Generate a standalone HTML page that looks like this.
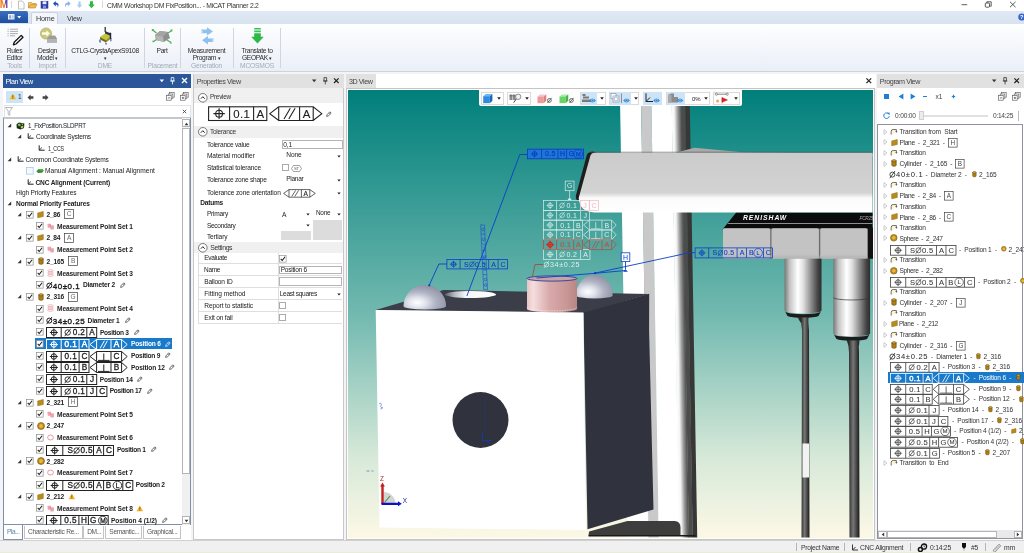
<!DOCTYPE html>
<html><head><meta charset="utf-8"><title>MiCAT Planner 2.2</title>
<style>
*{box-sizing:border-box;margin:0;padding:0}
html,body{width:1024px;height:553px;overflow:hidden;background:#f4f4f6}
body{will-change:transform;font-family:"Liberation Sans",sans-serif;font-size:6.6px;letter-spacing:-0.17px;color:#222;position:relative;line-height:1}
.abs{position:absolute}
svg{display:block;overflow:visible}
svg text{font-family:"Liberation Sans",sans-serif}
#title{left:0;top:0;width:1024px;height:11px;background:#fff}
#title .t{left:107.3px;top:2px;font-size:7.4px;letter-spacing:-0.3px;color:#333;white-space:nowrap;transform:scaleX(.924);transform-origin:0 50%}
#tabs{left:0;top:11px;width:1024px;height:13px;background:linear-gradient(#dfe8f4,#d9e3f0)}
#appbtn{left:0;top:0;width:28px;height:12px;background:linear-gradient(#3a6ec0,#1f4f9e);border-radius:0 2px 0 0}
#hometab{left:31px;top:1px;width:27px;height:13px;background:#f3f6fb;border:1px solid #c9d3e2;border-bottom:none;border-radius:2px 2px 0 0}
#tabs .lbl{top:4px;font-size:7.2px;color:#333}
#ribbon{left:0;top:24px;width:1024px;height:47px;background:linear-gradient(#fdfeff,#f6f8fc 40%,#eaeff7)}
#ribbon .sep{top:4px;width:1px;height:40px;background:#cfd6e2}
#ribbon .bl{font-size:6.7px;letter-spacing:-0.32px;color:#2a2a2a;text-align:center;line-height:7px;white-space:nowrap;transform:translateX(-50%)}
#ribbon .gl{top:39.3px;font-size:6.7px;letter-spacing:-0.2px;color:#a3abb8;text-align:center;white-space:nowrap;transform:translateX(-50%)}
#ribline{left:0;top:71px;width:1024px;height:1px;background:#cdd3dc}
.phead{height:14px;font-size:7.2px;white-space:nowrap}
.phead span{position:absolute;left:2.6px;top:3.5px}
#status{left:0;top:540px;width:1024px;height:13px;background:#f0f0f0;border-top:1px solid #d0d0d0}
#status .s{top:4px;font-size:6.8px;letter-spacing:-0.25px;color:#333;white-space:nowrap}
#status .v{top:2px;width:1px;height:8px;background:#b5b5b5}
.row{position:absolute;left:0;white-space:nowrap;height:12px}
.cb{position:absolute;width:7.6px;height:7.6px}
.tx{position:absolute;white-space:nowrap;font-size:6.6px}
.b{font-weight:bold;letter-spacing:-0.26px}
</style></head><body>
<!-- ===== Title bar ===== -->
<div id="title" class="abs">
 <svg class="abs" style="left:0;top:0" width="106" height="11" viewBox="0 0 106 11">
  <!-- M logo -->
  <clipPath id="mL"><rect x="-3" y="0" width="8" height="11"/></clipPath><clipPath id="mR"><rect x="5" y="0" width="6" height="11"/></clipPath>
  <text x="-0.300" y="8" font-size="10" font-weight="bold" fill="#f07a1c" clip-path="url(#mL)">M</text>
  <text x="-0.300" y="8" font-size="10" font-weight="bold" fill="#5b3fa8" clip-path="url(#mR)">M</text>
  <rect x="11" y="1" width="0.7" height="7" fill="#c8c8c8"/>
  <!-- new doc -->
  <path d="M18.5 1 h3.6 l2 2 v6 h-5.6z" fill="#fdfdfd" stroke="#9a9a9a" stroke-width=".6"/>
  <!-- open folder -->
  <path d="M28.5 8 v-5.5 h3 l.8 1 h3.6 v1.2" fill="#f6d27a" stroke="#b8862b" stroke-width=".6"/>
  <path d="M28.5 8 l1.8 -3.6 h6.7 l-1.8 3.6z" fill="#f2b84a" stroke="#b8862b" stroke-width=".6"/>
  <!-- save -->
  <rect x="41" y="1.2" width="7" height="7" fill="#2f3fb0" stroke="#1d2a84" stroke-width=".5"/>
  <rect x="42.6" y="1.4" width="3.8" height="2.8" fill="#e9ecff"/>
  <rect x="43" y="5.6" width="3" height="2.6" fill="#8b93d8"/>
  <!-- undo -->
  <path d="M53 3.6 l2.8 -2.6 v1.8 c3 0 3.6 2.6 1.6 5 c.8 -2 0 -3.2 -1.6 -3.2 v1.8z" fill="#1b4fc0"/>
  <!-- redo -->
  <path d="M70.6 3.6 l-2.8 -2.6 v1.8 c-3 0 -3.6 2.6 -1.6 5 c-.8 -2 0 -3.2 1.6 -3.2 v1.8z" fill="#8fb0e6"/>
  <!-- down light -->
  <path d="M78.4 1.5 h2.2 v3.2 h1.6 l-2.7 3.2 l-2.7 -3.2 h1.6z" fill="#a9cdf3"/>
  <!-- down green -->
  <path d="M90 1.2 h3 v3.2 h1.8 l-3.3 3.8 l-3.3 -3.8 h1.8z" fill="#2fb84a"/>
  <rect x="102" y="1" width="0.7" height="7" fill="#c8c8c8"/>
 </svg>
 <div class="abs t">CMM Workshop DM FixPosition... - MiCAT Planner 2.2</div>
 <svg class="abs" style="left:955px;top:0" width="69" height="11" viewBox="0 0 69 11">
  <path d="M6.500 4.700h5.700" stroke="#333" stroke-width=".8"/>
  <rect x="30.300" y="3" width="4.200" height="4.200" rx=".8" fill="none" stroke="#333" stroke-width=".8"/>
  <path d="M31.800 3v-1.200h4.400v4.400h-1.400" fill="none" stroke="#333" stroke-width=".8"/>
  <path d="M55 1.800l5.600 5.400m0 -5.400l-5.600 5.400" stroke="#333" stroke-width=".8"/>
 </svg>
</div>
<!-- ===== Tabs row ===== -->
<div id="tabs" class="abs">
 <div id="appbtn" class="abs">
  <svg width="28" height="12" viewBox="0 0 28 12"><rect x="8" y="3" width="6.5" height="5.5" fill="#e9eef8"/><rect x="9" y="4.3" width="2" height="3.2" fill="#8da6d4"/><rect x="11.8" y="4.3" width="1.8" height="3.2" fill="#b9c8e6"/><path d="M17.2 5 h4 l-2 2.4z" fill="#fff"/></svg>
 </div>
 <div id="hometab" class="abs"></div>
 <div class="abs lbl" style="left:36px">Home</div>
 <div class="abs lbl" style="left:67px">View</div>
 <svg class="abs" style="left:1017px;top:2px" width="7" height="8" viewBox="0 0 7 8"><circle cx="4.700" cy="4" r="3.500" fill="#3a66c8"/><text x="3.100" y="6.100" font-size="5.600" font-weight="bold" fill="#fff">?</text></svg>
</div>
<!-- ===== Ribbon ===== -->
<div id="ribbon" class="abs">
 <div class="abs sep" style="left:29px"></div>
 <div class="abs sep" style="left:65px"></div>
 <div class="abs sep" style="left:144px"></div>
 <div class="abs sep" style="left:180px"></div>
 <div class="abs sep" style="left:233px"></div>
 <div class="abs sep" style="left:280px"></div>
 <!-- Rules Editor icon -->
 <svg class="abs" style="left:6px;top:3px" width="18" height="18" viewBox="0 0 18 18">
  <g stroke="#8a8a8a" stroke-width=".7"><path d="M1.5 2.2h1.2M4 2.2h8M1.5 4.4h1.2M4 4.4h8M1.5 6.6h1.2M4 6.6h8M1.5 8.8h1.2M4 8.8h5"/></g>
  <path d="M8.2 15.2 l7 -6.8 l1.8 1.8 l-7 6.8 l-2.6 .8z" fill="#fff" stroke="#111" stroke-width="1.3" stroke-linejoin="round"/>
 </svg>
 <div class="abs bl" style="left:14.5px;top:23px">Rules<br>Editor</div>
 <div class="abs gl" style="left:14.5px">Tools</div>
 <!-- Design Model icon -->
 <svg class="abs" style="left:39px;top:3px" width="19" height="18" viewBox="0 0 19 18">
  <circle cx="7" cy="6.5" r="5.6" fill="#c9c77a" stroke="#aaa85a" stroke-width=".6"/>
  <path d="M3 5.2 h4.4 v-2 l3.6 3.3 l-3.6 3.3 v-2 h-4.4z" fill="#fdfde8"/>
  <path d="M8 12 l3 -3.2 h5 l2 3.2 v3.6 h-10z" fill="#8d8d8d"/>
  <path d="M8 12 h10 v3.600 h-10z" fill="#b4b4b4"/>
  <path d="M11 8.800 h5 l2 3.200 h-10z" fill="#9c9c9c"/>
 </svg>
 <div class="abs bl" style="left:47.5px;top:23px">Design<br>Model <span style="font-size:5px">▾</span></div>
 <div class="abs gl" style="left:47.5px">Import</div>
 <!-- DME icon -->
 <svg class="abs" style="left:97px;top:2px" width="18" height="19" viewBox="0 0 18 19">
  <path d="M8.2 1 v5" stroke="#222" stroke-width="1.2"/>
  <path d="M8 5 l6 2.6 v3 l-6 -2.600z" fill="#2b3350"/>
  <path d="M3 11 l5 -3.600 l6 2.600 l-5 4z" fill="#c8c43a"/>
  <path d="M3 11 l6 3 v2.400 l-6 -3z" fill="#6f6d20"/>
  <path d="M9 14 l5 -4 v2.400 l-5 4z" fill="#8f8c2a"/>
  <path d="M2.400 13.600 l1.200 .6 v2.600 l-1.200 -.6z M8.400 16.600 l1.200 .6 v1.600 l-1.200 -.6z M13.400 12.600 l1 -.6 v3 l-1 .6z" fill="#27408a"/>
  <path d="M12.800 6.400 l1.400 .6 v6 l-1.400 -.6z" fill="#1c2238"/>
 </svg>
 <div class="abs bl" style="left:105px;top:23px">CTLG-CrystaApexS9108<br><span style="font-size:5px">▾</span></div>
 <div class="abs gl" style="left:105px">DME</div>
 <!-- Part icon -->
 <svg class="abs" style="left:151px;top:4px" width="22" height="17" viewBox="0 0 22 17">
  <path d="M4 7 l5 -4 l8 1 l2 6 l-6 4 l-8 -2z" fill="#8f8f8f"/>
  <path d="M4 7 l8 1.400 l1 5.600 l-8 -2z" fill="#b5b5b5"/>
  <path d="M9 3 l8 1 l-5 4.400 l-8 -1.400z" fill="#a4a4a4"/>
  <path d="M1 1.500 l4.500 3.500 M21 2.500 l-4 2.500 M2.500 13.500 l3 -2 M20 14.500 l-4 -2.500" stroke="#4db24d" stroke-width="1.3"/>
  <path d="M0.800 3.600 l.2 -2.400 l2.400 .4z M21.400 1 l-.2 2.400 l-2.200 -1.200z M1.200 12.400 l.6 2.200 l2 -1.200z M21 15.600 l-2.400 -.2 l1.200 -2z" fill="#4db24d"/>
 </svg>
 <div class="abs bl" style="left:162px;top:23px">Part</div>
 <div class="abs gl" style="left:162.500px">Placement</div>
 <!-- Measurement Program icon -->
 <svg class="abs" style="left:199px;top:3px" width="17" height="18" viewBox="0 0 17 18">
  <path d="M2 2.600 h6 v-2.400 l6 4.200 l-6 4.200 v-2.400 h-6z" fill="#8fc0ee"/>
  <path d="M15 11.400 h-6 v-2.400 l-6 4.200 l6 4.200 v-2.400 h6z" fill="#8fc0ee"/>
  <path d="M2 2.600 h1.600 v3.600 h-1.600z M13.400 11.400 h1.600 v3.600 h-1.600z" fill="#cfe3f7"/>
 </svg>
 <div class="abs bl" style="left:206.500px;top:23px">Measurement<br>Program <span style="font-size:5px">▾</span></div>
 <div class="abs gl" style="left:206.500px">Generation</div>
 <!-- Translate icon -->
 <svg class="abs" style="left:250px;top:3px" width="15" height="18" viewBox="0 0 15 18">
  <path d="M4.200 1 h6.600 v1.600 h-6.600z M4.200 3.600 h6.600 v1.600 h-6.600z" fill="#39c257"/>
  <path d="M4.200 6.200 h6.600 v3.600 h3 l-6.300 6.800 l-6.300 -6.800 h3z" fill="#2fb84a"/>
 </svg>
 <div class="abs bl" style="left:257px;top:23px">Translate to<br>GEOPAK <span style="font-size:5px">▾</span></div>
 <div class="abs gl" style="left:257px">MCOSMOS</div>
</div>
<div id="ribline" class="abs"></div>
<!-- ===== Status bar ===== -->
<div id="status" class="abs">
 <div class="abs v" style="left:796px"></div><div class="abs v" style="left:844px"></div><div class="abs v" style="left:910px"></div><div class="abs v" style="left:985px"></div>
 <div class="abs s" style="left:801px">Project Name</div>
 <svg class="abs" style="left:851px;top:3px" width="8" height="8" viewBox="0 0 8 8"><path d="M1.500 0.500 v5.500 h5.500 M1.500 6 l3 -3" fill="none" stroke="#222" stroke-width=".9"/></svg>
 <div class="abs s" style="left:860px">CNC Alignment</div>
 <svg class="abs" style="left:917px;top:1.500px" width="11" height="10" viewBox="0 0 11 10"><circle cx="3.400" cy="6.400" r="2" fill="none" stroke="#111" stroke-width="1.500"/><circle cx="7" cy="3.600" r="2.600" fill="none" stroke="#111" stroke-width="1.300"/><path d="M7 2.200 v1.600 h1" stroke="#111" stroke-width=".6" fill="none"/></svg>
 <div class="abs s" style="left:930px">0:14:25</div>
 <svg class="abs" style="left:961px;top:1px" width="6" height="10" viewBox="0 0 6 10"><path d="M1 1 h4 v3.500 l-1.200 2 h-1.600 l-1.200 -2z" fill="#111"/><path d="M3 6 v3" stroke="#888" stroke-width=".5"/></svg>
 <div class="abs s" style="left:971px">#5</div>
 <svg class="abs" style="left:992px;top:2px" width="10" height="9" viewBox="0 0 10 9"><path d="M1 7.600 l6 -6.400 l1.800 1.600 l-6 6.400z" fill="#ddd" stroke="#666" stroke-width=".6"/><path d="M3 5.400 l1 1 M4.400 4 l1 1 M5.800 2.600 l1 1" stroke="#666" stroke-width=".4"/></svg>
 <div class="abs s" style="left:1004px">mm</div>
 <div class="abs" style="left:0;top:11px;width:1024px;height:1px;background:#e9ecd6"></div>
</div>
<div id="plan" class="abs" style="left:3px;top:74px;width:188px;height:466px;background:#fff">
<div class="abs phead" style="left:0;top:0;width:188px;background:#2b579a;color:#fff"><span style="letter-spacing:-0.52px">Plan View</span><svg class="abs" style="left:155px;top:2px" width="33" height="10" viewBox="0 0 33 10"><path d="M1.6 3.4h4.4l-2.200 2.800z" fill="#fff"/><path d="M13.200 1.600h2.600v3.400h-2.600zM12.200 5h4.600M14.500 5v3.400" stroke="#fff" stroke-width=".8" fill="none"/><path d="M24 2l5 5m0 -5l-5 5" stroke="#fff" stroke-width="1.300"/></svg></div>
<div class="abs" style="left:3px;top:17px;width:17px;height:11.500px;background:#cce4f7"></div>
<div class="abs" style="left:6.00px;top:19.20px;"><svg width="7.6" height="6.6499999999999995" viewBox="0 0 8 7"><path d="M4 0.4L7.6 6.6H0.4Z" fill="#f5b82e"/><path d="M4 2.4V4.6M4 5.2V6" stroke="#5a3a00" stroke-width=".8"/></svg></div>
<div class="tx" style="left:15.00px;top:19.90px;color:#333;">1</div>
<div class="abs" style="left:24.00px;top:19.50px;"><svg width="7" height="7" viewBox="0 0 7 7"><path d="M0.500 3.500L3.600 0.600V2.200H6.400V4.800H3.600V6.400Z" fill="#444"/></svg></div>
<div class="abs" style="left:38.50px;top:19.50px;"><svg width="7" height="7" viewBox="0 0 7 7"><path d="M6.500 3.500L3.400 0.600V2.200H0.600V4.800H3.400V6.400Z" fill="#444"/></svg></div>
<div class="abs" style="left:163.00px;top:18.00px;"><svg width="9" height="9" viewBox="0 0 9 9"><g fill="#fff" stroke="#666" stroke-width=".7"><rect x="3.600" y="0.600" width="4.600" height="4.600"/><rect x="2.200" y="2" width="4.600" height="4.600"/><rect x="0.600" y="3.600" width="4.600" height="4.600"/></g><path d="M1.800 5.900h2.200" stroke="#444" stroke-width=".7"/></svg></div>
<div class="abs" style="left:176.50px;top:18.00px;"><svg width="9" height="9" viewBox="0 0 9 9"><g fill="#fff" stroke="#666" stroke-width=".7"><rect x="3.600" y="0.600" width="4.600" height="4.600"/><rect x="2.200" y="2" width="4.600" height="4.600"/><rect x="0.600" y="3.600" width="4.600" height="4.600"/></g><path d="M1.800 5.900h2.200M2.900 4.800v2.200" stroke="#444" stroke-width=".7"/></svg></div>
<div class="abs" style="left:0.500px;top:31px;width:187px;height:11.500px;border:0.600px solid #dfe3ea;border-bottom:none;background:#fff"></div>
<div class="abs" style="left:2.00px;top:33.00px;"><svg width="8" height="9" viewBox="0 0 8 9"><path d="M0.500 0.500H7.500L4.800 4V8.400L3.200 7.400V4Z" fill="#fff" stroke="#888" stroke-width=".6"/></svg></div>
<div class="abs" style="left:178.50px;top:34.50px;"><svg width="5" height="5" viewBox="0 0 5 5"><path d="M0.800 0.800l3.400 3.400m0 -3.400l-3.400 3.400" stroke="#333" stroke-width=".8"/></svg></div>
<div class="abs" style="left:0.300px;top:42.500px;width:187.600px;height:408.500px;border:0.800px solid #7f8fa8;border-top:2px solid #c3c7ce;background:#fff;overflow:hidden"></div>
<div class="abs" style="left:1px;top:44px;width:178px;height:406.500px;overflow:hidden"><div class="abs" style="left:-1px;top:-44px">
<div class="abs" style="left:4.00px;top:49.00px;"><svg width="5" height="5" viewBox="0 0 5 5"><path d="M4.2 0.6V4.2H0.6Z" fill="#333"/></svg></div>
<div class="abs" style="left:12.50px;top:47.60px;"><svg width="9" height="8" viewBox="0 0 9 8"><path d="M0.5 2.2L3 0.6L8.4 1.6L8 6L4.6 7.6L0.8 6.2Z" fill="#1d2a1a"/><path d="M1.6 2.6L3.6 1.6L5 3L3 4.4Z" fill="#7fcf5a"/><path d="M4.6 4.6L7.2 3.4L7.4 5.4L5 6.6Z" fill="#b7d94a"/><path d="M5.2 1.6L7.2 2L6.2 3Z" fill="#e9f0c8"/></svg></div>
<div class="tx" style="left:24.50px;top:49.10px;letter-spacing:-0.3px;transform:scaleX(0.942);transform-origin:0 50%;">1_FixPosition.SLDPRT</div>
<div class="abs" style="left:13.80px;top:60.30px;"><svg width="5" height="5" viewBox="0 0 5 5"><path d="M4.2 0.6V4.2H0.6Z" fill="#333"/></svg></div>
<div class="abs" style="left:24.00px;top:59.40px;"><svg width="7" height="7" viewBox="0 0 7 7"><path d="M1.2 0.3V5.2H6.6" fill="none" stroke="#222" stroke-width="1"/><path d="M1.2 5.2L4 2.4" stroke="#222" stroke-width=".8"/></svg></div>
<div class="tx" style="left:33.00px;top:60.40px;letter-spacing:-0.249px;">Coordinate Systems</div>
<div class="abs" style="left:34.50px;top:70.60px;"><svg width="7" height="7" viewBox="0 0 7 7"><path d="M1.2 0.3V5.2H6.6" fill="none" stroke="#222" stroke-width="1"/><path d="M1.2 5.2L4 2.4" stroke="#222" stroke-width=".8"/></svg></div>
<div class="tx" style="left:45.00px;top:71.60px;letter-spacing:-0.3px;transform:scaleX(0.797);transform-origin:0 50%;">1_CCS</div>
<div class="abs" style="left:4.00px;top:83.00px;"><svg width="5" height="5" viewBox="0 0 5 5"><path d="M4.2 0.6V4.2H0.6Z" fill="#333"/></svg></div>
<div class="abs" style="left:14.00px;top:82.10px;"><svg width="7" height="7" viewBox="0 0 7 7"><path d="M1.2 0.3V5.2H6.6" fill="none" stroke="#222" stroke-width="1"/><path d="M1.2 5.2L4 2.4" stroke="#222" stroke-width=".8"/></svg></div>
<div class="tx" style="left:22.50px;top:83.10px;letter-spacing:-0.189px;">Common Coordinate Systems</div>
<svg class="cb" style="left:22.80px;top:92.70px" width="7.600" height="7.600" viewBox="0 0 7.600 7.600"><rect x="0.450" y="0.450" width="6.700" height="6.700" fill="#f4f9fe" stroke="#9cc2e8" stroke-width=".7"/></svg>
<div class="abs" style="left:33.00px;top:93.60px;"><svg width="8" height="6" viewBox="0 0 8 6"><path d="M0.4 3.2L2.6 1L6.6 1L7.8 2.8L6 4.8L2 5Z" fill="#3c8a3c"/><path d="M2.6 1L6.6 1L7.8 2.8L4 2.6Z" fill="#5fae4f"/></svg></div>
<div class="tx" style="left:42.00px;top:94.10px;letter-spacing:-0.013px;">Manual Alignment : Manual Alignment</div>
<div class="abs" style="left:24.00px;top:104.50px;"><svg width="7" height="7" viewBox="0 0 7 7"><path d="M1.2 0.3V5.2H6.6" fill="none" stroke="#222" stroke-width="1"/><path d="M1.2 5.2L4 2.4" stroke="#222" stroke-width=".8"/></svg></div>
<div class="tx b" style="left:32.50px;top:105.50px;letter-spacing:-0.155px;">CNC Alignment (Current)</div>
<div class="tx" style="left:13.00px;top:116.10px;letter-spacing:-0.158px;">High Priority Features</div>
<div class="abs" style="left:4.00px;top:127.00px;"><svg width="5" height="5" viewBox="0 0 5 5"><path d="M4.2 0.6V4.2H0.6Z" fill="#333"/></svg></div>
<div class="tx b" style="left:13.00px;top:127.10px;letter-spacing:-0.132px;">Normal Priority Features</div>
<div class="abs" style="left:14.00px;top:137.80px;"><svg width="5" height="5" viewBox="0 0 5 5"><path d="M4.2 0.6V4.2H0.6Z" fill="#333"/></svg></div>
<svg class="cb" style="left:22.80px;top:136.50px" width="7.600" height="7.600" viewBox="0 0 7.600 7.600"><rect x="0.450" y="0.450" width="6.700" height="6.700" fill="#fff" stroke="#8a8a8a" stroke-width=".7"/><path d="M1.700 3.900L3.200 5.500L6.100 1.700" fill="none" stroke="#1a1a1a" stroke-width="1.050"/></svg>
<div class="abs" style="left:34.00px;top:136.90px;"><svg width="7.0" height="7.0" viewBox="0 0 7 7"><path d="M0.700 1.900L6.300 0.500V5.500L0.700 6.800Z" fill="#b98a1c" stroke="#8f6a12" stroke-width=".5"/></svg></div>
<div class="tx b" style="left:43.60px;top:137.90px;letter-spacing:-0.294px;">2_86</div>
<div class="abs" style="left:60.90px;top:135.40px;"><svg width="10" height="10" viewBox="0 0 10 10"><rect x="0.5" y="0.5" width="9" height="9" fill="#fff" stroke="#3c3c3c" stroke-width=".7"/><text x="5" y="7.4" font-size="6.6" text-anchor="middle" fill="#6a6a6a">C</text></svg></div>
<svg class="cb" style="left:33.10px;top:148.25px" width="7.600" height="7.600" viewBox="0 0 7.600 7.600"><rect x="0.450" y="0.450" width="6.700" height="6.700" fill="#fff" stroke="#8a8a8a" stroke-width=".7"/><path d="M1.700 3.900L3.200 5.500L6.100 1.700" fill="none" stroke="#1a1a1a" stroke-width="1.050"/></svg>
<div class="abs" style="left:43.50px;top:148.65px;"><svg width="8" height="7" viewBox="0 0 8 7"><rect x="0.600" y="0.700" width="3.400" height="4" rx=".6" fill="#eda3ad"/><rect x="3.300" y="2.300" width="3.600" height="4.100" rx=".6" fill="#eda3ad"/><path d="M3.300 0.900V4.500" stroke="#e58a96" stroke-width=".6"/></svg></div>
<div class="tx b" style="left:54.00px;top:149.65px;letter-spacing:-0.113px;">Measurement Point Set 1</div>
<div class="abs" style="left:14.00px;top:161.30px;"><svg width="5" height="5" viewBox="0 0 5 5"><path d="M4.2 0.6V4.2H0.6Z" fill="#333"/></svg></div>
<svg class="cb" style="left:22.80px;top:160.00px" width="7.600" height="7.600" viewBox="0 0 7.600 7.600"><rect x="0.450" y="0.450" width="6.700" height="6.700" fill="#fff" stroke="#8a8a8a" stroke-width=".7"/><path d="M1.700 3.900L3.200 5.500L6.100 1.700" fill="none" stroke="#1a1a1a" stroke-width="1.050"/></svg>
<div class="abs" style="left:34.00px;top:160.40px;"><svg width="7.0" height="7.0" viewBox="0 0 7 7"><path d="M0.700 1.900L6.300 0.500V5.500L0.700 6.800Z" fill="#b98a1c" stroke="#8f6a12" stroke-width=".5"/></svg></div>
<div class="tx b" style="left:43.60px;top:161.40px;letter-spacing:-0.294px;">2_84</div>
<div class="abs" style="left:60.90px;top:158.90px;"><svg width="10" height="10" viewBox="0 0 10 10"><rect x="0.5" y="0.5" width="9" height="9" fill="#fff" stroke="#3c3c3c" stroke-width=".7"/><text x="5" y="7.4" font-size="6.6" text-anchor="middle" fill="#6a6a6a">A</text></svg></div>
<svg class="cb" style="left:33.10px;top:171.75px" width="7.600" height="7.600" viewBox="0 0 7.600 7.600"><rect x="0.450" y="0.450" width="6.700" height="6.700" fill="#fff" stroke="#8a8a8a" stroke-width=".7"/><path d="M1.700 3.900L3.200 5.500L6.100 1.700" fill="none" stroke="#1a1a1a" stroke-width="1.050"/></svg>
<div class="abs" style="left:43.50px;top:172.15px;"><svg width="8" height="7" viewBox="0 0 8 7"><rect x="0.600" y="0.700" width="3.400" height="4" rx=".6" fill="#eda3ad"/><rect x="3.300" y="2.300" width="3.600" height="4.100" rx=".6" fill="#eda3ad"/><path d="M3.300 0.900V4.500" stroke="#e58a96" stroke-width=".6"/></svg></div>
<div class="tx b" style="left:54.00px;top:173.15px;letter-spacing:-0.113px;">Measurement Point Set 2</div>
<div class="abs" style="left:14.00px;top:184.80px;"><svg width="5" height="5" viewBox="0 0 5 5"><path d="M4.2 0.6V4.2H0.6Z" fill="#333"/></svg></div>
<svg class="cb" style="left:22.80px;top:183.50px" width="7.600" height="7.600" viewBox="0 0 7.600 7.600"><rect x="0.450" y="0.450" width="6.700" height="6.700" fill="#fff" stroke="#8a8a8a" stroke-width=".7"/><path d="M1.700 3.900L3.200 5.500L6.100 1.700" fill="none" stroke="#1a1a1a" stroke-width="1.050"/></svg>
<div class="abs" style="left:34.50px;top:183.40px;"><svg width="6.0" height="8.0" viewBox="0 0 6 8"><path d="M0.800 1.800V6.200A2.200 1.100 0 0 0 5.200 6.200V1.800Z" fill="#b07f14" stroke="#5e430a" stroke-width=".6"/><ellipse cx="3" cy="1.800" rx="2.200" ry="1.100" fill="#d9a935" stroke="#5e430a" stroke-width=".6"/></svg></div>
<div class="tx b" style="left:43.60px;top:184.90px;letter-spacing:-0.188px;">2_165</div>
<div class="abs" style="left:64.70px;top:182.40px;"><svg width="10" height="10" viewBox="0 0 10 10"><rect x="0.5" y="0.5" width="9" height="9" fill="#fff" stroke="#3c3c3c" stroke-width=".7"/><text x="5" y="7.4" font-size="6.6" text-anchor="middle" fill="#6a6a6a">B</text></svg></div>
<svg class="cb" style="left:33.10px;top:195.25px" width="7.600" height="7.600" viewBox="0 0 7.600 7.600"><rect x="0.450" y="0.450" width="6.700" height="6.700" fill="#fff" stroke="#8a8a8a" stroke-width=".7"/><path d="M1.700 3.900L3.200 5.500L6.100 1.700" fill="none" stroke="#1a1a1a" stroke-width="1.050"/></svg>
<div class="abs" style="left:43.50px;top:195.15px;"><svg width="7" height="8" viewBox="0 0 7 8"><g fill="none" stroke="#e08a92" stroke-width=".6"><ellipse cx="3.5" cy="1.8" rx="2.8" ry="1.1"/><ellipse cx="3.5" cy="4" rx="2.8" ry="1.1"/><ellipse cx="3.5" cy="6.2" rx="2.8" ry="1.1"/></g></svg></div>
<div class="tx b" style="left:54.00px;top:196.65px;letter-spacing:-0.113px;">Measurement Point Set 3</div>
<svg class="cb" style="left:33.10px;top:207.00px" width="7.600" height="7.600" viewBox="0 0 7.600 7.600"><rect x="0.450" y="0.450" width="6.700" height="6.700" fill="#fff" stroke="#8a8a8a" stroke-width=".7"/><path d="M1.700 3.900L3.200 5.500L6.100 1.700" fill="none" stroke="#1a1a1a" stroke-width="1.050"/></svg>
<div class="abs" style="left:43.2px;top:206.10px"><svg width="40" height="11" viewBox="0 0 40 11"><circle cx="3.300" cy="5.600" r="2.500" fill="none" stroke="#1a1a1a" stroke-width="1"/><path d="M0.600 9.200L6 2" stroke="#1a1a1a" stroke-width="1"/><text x="6.800" y="8.500" font-size="8" letter-spacing="0.500" fill="#1a1a1a" stroke="#1a1a1a" stroke-width=".35">40±0.1</text></svg></div>
<div class="tx b" style="left:80.00px;top:208.40px;letter-spacing:-0.172px;">Diameter 2</div>
<div class="abs" style="left:117.00px;top:207.90px;"><svg width="6" height="6" viewBox="0 0 6 6"><path d="M0.6 5.4L1 3.8L3.8 0.8L5.2 2.2L2.2 5Z" fill="none" stroke="#333" stroke-width=".7" stroke-linejoin="round"/><path d="M3 1.8L4.2 3" stroke="#333" stroke-width=".5"/></svg></div>
<div class="abs" style="left:14.00px;top:220.05px;"><svg width="5" height="5" viewBox="0 0 5 5"><path d="M4.2 0.6V4.2H0.6Z" fill="#333"/></svg></div>
<svg class="cb" style="left:22.80px;top:218.75px" width="7.600" height="7.600" viewBox="0 0 7.600 7.600"><rect x="0.450" y="0.450" width="6.700" height="6.700" fill="#fff" stroke="#8a8a8a" stroke-width=".7"/><path d="M1.700 3.900L3.200 5.500L6.100 1.700" fill="none" stroke="#1a1a1a" stroke-width="1.050"/></svg>
<div class="abs" style="left:34.50px;top:218.65px;"><svg width="6.0" height="8.0" viewBox="0 0 6 8"><path d="M0.800 1.800V6.200A2.200 1.100 0 0 0 5.200 6.200V1.800Z" fill="#b07f14" stroke="#5e430a" stroke-width=".6"/><ellipse cx="3" cy="1.800" rx="2.200" ry="1.100" fill="#d9a935" stroke="#5e430a" stroke-width=".6"/></svg></div>
<div class="tx b" style="left:43.60px;top:220.15px;letter-spacing:-0.188px;">2_316</div>
<div class="abs" style="left:64.70px;top:217.65px;"><svg width="10" height="10" viewBox="0 0 10 10"><rect x="0.5" y="0.5" width="9" height="9" fill="#fff" stroke="#3c3c3c" stroke-width=".7"/><text x="5" y="7.4" font-size="6.6" text-anchor="middle" fill="#6a6a6a">G</text></svg></div>
<svg class="cb" style="left:33.10px;top:230.50px" width="7.600" height="7.600" viewBox="0 0 7.600 7.600"><rect x="0.450" y="0.450" width="6.700" height="6.700" fill="#fff" stroke="#8a8a8a" stroke-width=".7"/><path d="M1.700 3.900L3.200 5.500L6.100 1.700" fill="none" stroke="#1a1a1a" stroke-width="1.050"/></svg>
<div class="abs" style="left:43.50px;top:230.40px;"><svg width="7" height="8" viewBox="0 0 7 8"><g fill="none" stroke="#e08a92" stroke-width=".6"><ellipse cx="3.5" cy="1.8" rx="2.8" ry="1.1"/><ellipse cx="3.5" cy="4" rx="2.8" ry="1.1"/><ellipse cx="3.5" cy="6.2" rx="2.8" ry="1.1"/></g></svg></div>
<div class="tx b" style="left:54.00px;top:231.90px;letter-spacing:-0.113px;">Measurement Point Set 4</div>
<svg class="cb" style="left:33.10px;top:242.25px" width="7.600" height="7.600" viewBox="0 0 7.600 7.600"><rect x="0.450" y="0.450" width="6.700" height="6.700" fill="#fff" stroke="#8a8a8a" stroke-width=".7"/><path d="M1.700 3.900L3.200 5.500L6.100 1.700" fill="none" stroke="#1a1a1a" stroke-width="1.050"/></svg>
<div class="abs" style="left:43.2px;top:241.35px"><svg width="40" height="11" viewBox="0 0 40 11"><circle cx="3.300" cy="5.600" r="2.500" fill="none" stroke="#1a1a1a" stroke-width="1"/><path d="M0.600 9.200L6 2" stroke="#1a1a1a" stroke-width="1"/><text x="6.800" y="8.500" font-size="8" letter-spacing="0.500" fill="#1a1a1a" stroke="#1a1a1a" stroke-width=".35">34±0.25</text></svg></div>
<div class="tx b" style="left:84.60px;top:243.65px;letter-spacing:-0.172px;">Diameter 1</div>
<div class="abs" style="left:122.00px;top:243.15px;"><svg width="6" height="6" viewBox="0 0 6 6"><path d="M0.6 5.4L1 3.8L3.8 0.8L5.2 2.2L2.2 5Z" fill="none" stroke="#333" stroke-width=".7" stroke-linejoin="round"/><path d="M3 1.8L4.2 3" stroke="#333" stroke-width=".5"/></svg></div>
<svg class="cb" style="left:33.10px;top:254.00px" width="7.600" height="7.600" viewBox="0 0 7.600 7.600"><rect x="0.450" y="0.450" width="6.700" height="6.700" fill="#fff" stroke="#8a8a8a" stroke-width=".7"/><path d="M1.700 3.900L3.200 5.500L6.100 1.700" fill="none" stroke="#1a1a1a" stroke-width="1.050"/></svg>
<div class="abs" style="left:43.10px;top:253.20px;"><svg width="51.70" height="11.00" viewBox="0 0 51.70 11.00"><rect x="0.50" y="0.50" width="50.20" height="10.00" fill="none" stroke="#222" stroke-width="1.0"/><path d="M15.20 0.50v10.00M40.80 0.50v10.00" stroke="#222" stroke-width="1.0"/><circle cx="7.85" cy="5.50" r="2.7" fill="none" stroke="#222" stroke-width="1.0"/><path d="M3.85 5.50h8.00M7.85 1.50v8.00" stroke="#222" stroke-width="1.0"/><circle cx="21.70" cy="5.50" r="2.7" fill="none" stroke="#222" stroke-width="0.9"/><path d="M18.70 9.20L24.70 1.80" stroke="#222" stroke-width="0.9"/><text x="26.80" y="8.45" font-size="8.2" fill="#222" stroke="#222" stroke-width="0.3" font-weight="normal" letter-spacing="0.35">0.2</text><text x="46.08" y="8.45" font-size="8.2" text-anchor="middle" fill="#222" stroke="#222" stroke-width="0.3" font-weight="normal" letter-spacing="0">A</text></svg></div>
<div class="tx b" style="left:97.00px;top:255.50px;color:#222;letter-spacing:-0.282px;">Position 3</div>
<div class="abs" style="left:130.70px;top:254.90px;"><svg width="6" height="6" viewBox="0 0 6 6"><path d="M0.6 5.4L1 3.8L3.8 0.8L5.2 2.2L2.2 5Z" fill="none" stroke="#333" stroke-width=".7" stroke-linejoin="round"/><path d="M3 1.8L4.2 3" stroke="#333" stroke-width=".5"/></svg></div>
<div class="abs" style="left:31.799999999999997px;top:264.05px;width:137.400px;height:11.300px;background:#1979ca"></div>
<svg class="cb" style="left:33.10px;top:265.75px" width="7.600" height="7.600" viewBox="0 0 7.600 7.600"><rect x="0.450" y="0.450" width="6.700" height="6.700" fill="#fff" stroke="#8a8a8a" stroke-width=".7"/><path d="M1.700 3.900L3.200 5.500L6.100 1.700" fill="none" stroke="#1a1a1a" stroke-width="1.050"/></svg>
<div class="abs" style="left:43.10px;top:264.95px;"><svg width="82.20" height="11.00" viewBox="0 0 82.20 11.00"><rect x="0.50" y="0.50" width="42.50" height="10.00" fill="none" stroke="#fff" stroke-width="1.0"/><path d="M15.20 0.50v10.00M33.10 0.50v10.00" stroke="#fff" stroke-width="1.0"/><circle cx="7.85" cy="5.50" r="2.7" fill="none" stroke="#fff" stroke-width="1.0"/><path d="M3.85 5.50h8.00M7.85 1.50v8.00" stroke="#fff" stroke-width="1.0"/><text x="24.89" y="8.45" font-size="8.2" text-anchor="middle" fill="#fff" stroke="#fff" stroke-width="0.5" font-weight="normal" letter-spacing="0.4">0.1</text><text x="38.38" y="8.45" font-size="8.2" text-anchor="middle" fill="#fff" stroke="#fff" stroke-width="0.5" font-weight="normal" letter-spacing="0">A</text><path d="M50.60 0.50H75.60L81.20 5.50L75.60 10.50H50.60L44.00 5.50Z M50.60 0.50V10.50 M65.00 0.50V10.50 M75.60 0.50V10.50" fill="none" stroke="#fff" stroke-width="1.0" stroke-linejoin="miter"/><path d="M54.20 9.30L58.40 1.70M57.20 9.30L61.40 1.70" stroke="#fff" stroke-width="1.0"/><text x="70.30" y="8.45" font-size="8.2" text-anchor="middle" fill="#fff" stroke="#fff" stroke-width="0.5" font-weight="normal">A</text></svg></div>
<div class="tx b" style="left:128.00px;top:267.25px;color:#fff;letter-spacing:-0.171px;">Position 6</div>
<div class="abs" style="left:162.00px;top:266.65px;"><svg width="6" height="6" viewBox="0 0 6 6"><path d="M0.6 5.4L1 3.8L3.8 0.8L5.2 2.2L2.2 5Z" fill="none" stroke="#fff" stroke-width=".7" stroke-linejoin="round"/><path d="M3 1.8L4.2 3" stroke="#fff" stroke-width=".5"/></svg></div>
<svg class="cb" style="left:33.10px;top:277.50px" width="7.600" height="7.600" viewBox="0 0 7.600 7.600"><rect x="0.450" y="0.450" width="6.700" height="6.700" fill="#fff" stroke="#8a8a8a" stroke-width=".7"/><path d="M1.700 3.900L3.200 5.500L6.100 1.700" fill="none" stroke="#1a1a1a" stroke-width="1.050"/></svg>
<div class="abs" style="left:43.10px;top:276.70px;"><svg width="82.20" height="11.00" viewBox="0 0 82.20 11.00"><rect x="0.50" y="0.50" width="42.50" height="10.00" fill="none" stroke="#222" stroke-width="1.0"/><path d="M15.20 0.50v10.00M33.10 0.50v10.00" stroke="#222" stroke-width="1.0"/><circle cx="7.85" cy="5.50" r="2.7" fill="none" stroke="#222" stroke-width="1.0"/><path d="M3.85 5.50h8.00M7.85 1.50v8.00" stroke="#222" stroke-width="1.0"/><text x="24.89" y="8.45" font-size="8.2" text-anchor="middle" fill="#222" stroke="#222" stroke-width="0.3" font-weight="normal" letter-spacing="0.4">0.1</text><text x="38.38" y="8.45" font-size="8.2" text-anchor="middle" fill="#222" stroke="#222" stroke-width="0.3" font-weight="normal" letter-spacing="0">C</text><path d="M50.60 0.50H75.60L81.20 5.50L75.60 10.50H50.60L44.00 5.50Z M50.60 0.50V10.50 M65.00 0.50V10.50 M75.60 0.50V10.50" fill="none" stroke="#222" stroke-width="1.0" stroke-linejoin="miter"/><path d="M52.00 9.40h11.60M57.80 9.40V2.50" stroke="#222" stroke-width="1.0"/><text x="70.30" y="8.45" font-size="8.2" text-anchor="middle" fill="#222" stroke="#222" stroke-width="0.3" font-weight="normal">C</text></svg></div>
<div class="tx b" style="left:128.00px;top:279.00px;color:#222;letter-spacing:-0.237px;">Position 9</div>
<div class="abs" style="left:161.70px;top:278.40px;"><svg width="6" height="6" viewBox="0 0 6 6"><path d="M0.6 5.4L1 3.8L3.8 0.8L5.2 2.2L2.2 5Z" fill="none" stroke="#333" stroke-width=".7" stroke-linejoin="round"/><path d="M3 1.8L4.2 3" stroke="#333" stroke-width=".5"/></svg></div>
<svg class="cb" style="left:33.10px;top:289.25px" width="7.600" height="7.600" viewBox="0 0 7.600 7.600"><rect x="0.450" y="0.450" width="6.700" height="6.700" fill="#fff" stroke="#8a8a8a" stroke-width=".7"/><path d="M1.700 3.900L3.200 5.500L6.100 1.700" fill="none" stroke="#1a1a1a" stroke-width="1.050"/></svg>
<div class="abs" style="left:43.10px;top:288.45px;"><svg width="82.20" height="11.00" viewBox="0 0 82.20 11.00"><rect x="0.50" y="0.50" width="42.50" height="10.00" fill="none" stroke="#222" stroke-width="1.0"/><path d="M15.20 0.50v10.00M33.10 0.50v10.00" stroke="#222" stroke-width="1.0"/><circle cx="7.85" cy="5.50" r="2.7" fill="none" stroke="#222" stroke-width="1.0"/><path d="M3.85 5.50h8.00M7.85 1.50v8.00" stroke="#222" stroke-width="1.0"/><text x="24.89" y="8.45" font-size="8.2" text-anchor="middle" fill="#222" stroke="#222" stroke-width="0.3" font-weight="normal" letter-spacing="0.4">0.1</text><text x="38.38" y="8.45" font-size="8.2" text-anchor="middle" fill="#222" stroke="#222" stroke-width="0.3" font-weight="normal" letter-spacing="0">B</text><path d="M50.60 0.50H75.60L81.20 5.50L75.60 10.50H50.60L44.00 5.50Z M50.60 0.50V10.50 M65.00 0.50V10.50 M75.60 0.50V10.50" fill="none" stroke="#222" stroke-width="1.0" stroke-linejoin="miter"/><path d="M52.00 9.40h11.60M57.80 9.40V2.50" stroke="#222" stroke-width="1.0"/><text x="70.30" y="8.45" font-size="8.2" text-anchor="middle" fill="#222" stroke="#222" stroke-width="0.3" font-weight="normal">B</text></svg></div>
<div class="tx b" style="left:128.00px;top:290.75px;color:#222;letter-spacing:-0.121px;">Position 12</div>
<div class="abs" style="left:166.00px;top:290.15px;"><svg width="6" height="6" viewBox="0 0 6 6"><path d="M0.6 5.4L1 3.8L3.8 0.8L5.2 2.2L2.2 5Z" fill="none" stroke="#333" stroke-width=".7" stroke-linejoin="round"/><path d="M3 1.8L4.2 3" stroke="#333" stroke-width=".5"/></svg></div>
<svg class="cb" style="left:33.10px;top:301.00px" width="7.600" height="7.600" viewBox="0 0 7.600 7.600"><rect x="0.450" y="0.450" width="6.700" height="6.700" fill="#fff" stroke="#8a8a8a" stroke-width=".7"/><path d="M1.700 3.900L3.200 5.500L6.100 1.700" fill="none" stroke="#1a1a1a" stroke-width="1.050"/></svg>
<div class="abs" style="left:43.10px;top:300.20px;"><svg width="51.70" height="11.00" viewBox="0 0 51.70 11.00"><rect x="0.50" y="0.50" width="50.20" height="10.00" fill="none" stroke="#222" stroke-width="1.0"/><path d="M15.20 0.50v10.00M40.80 0.50v10.00" stroke="#222" stroke-width="1.0"/><circle cx="7.85" cy="5.50" r="2.7" fill="none" stroke="#222" stroke-width="1.0"/><path d="M3.85 5.50h8.00M7.85 1.50v8.00" stroke="#222" stroke-width="1.0"/><circle cx="21.70" cy="5.50" r="2.7" fill="none" stroke="#222" stroke-width="0.9"/><path d="M18.70 9.20L24.70 1.80" stroke="#222" stroke-width="0.9"/><text x="26.80" y="8.45" font-size="8.2" fill="#222" stroke="#222" stroke-width="0.3" font-weight="normal" letter-spacing="0.35">0.1</text><text x="46.08" y="8.45" font-size="8.2" text-anchor="middle" fill="#222" stroke="#222" stroke-width="0.3" font-weight="normal" letter-spacing="0">J</text></svg></div>
<div class="tx b" style="left:96.80px;top:302.50px;color:#222;letter-spacing:-0.201px;">Position 14</div>
<div class="abs" style="left:134.40px;top:301.90px;"><svg width="6" height="6" viewBox="0 0 6 6"><path d="M0.6 5.4L1 3.8L3.8 0.8L5.2 2.2L2.2 5Z" fill="none" stroke="#333" stroke-width=".7" stroke-linejoin="round"/><path d="M3 1.8L4.2 3" stroke="#333" stroke-width=".5"/></svg></div>
<svg class="cb" style="left:33.10px;top:312.75px" width="7.600" height="7.600" viewBox="0 0 7.600 7.600"><rect x="0.450" y="0.450" width="6.700" height="6.700" fill="#fff" stroke="#8a8a8a" stroke-width=".7"/><path d="M1.700 3.900L3.200 5.500L6.100 1.700" fill="none" stroke="#1a1a1a" stroke-width="1.050"/></svg>
<div class="abs" style="left:43.10px;top:311.95px;"><svg width="61.90" height="11.00" viewBox="0 0 61.90 11.00"><rect x="0.50" y="0.50" width="60.40" height="10.00" fill="none" stroke="#222" stroke-width="1.0"/><path d="M15.20 0.50v10.00M40.80 0.50v10.00M50.70 0.50v10.00" stroke="#222" stroke-width="1.0"/><circle cx="7.85" cy="5.50" r="2.7" fill="none" stroke="#222" stroke-width="1.0"/><path d="M3.85 5.50h8.00M7.85 1.50v8.00" stroke="#222" stroke-width="1.0"/><circle cx="21.70" cy="5.50" r="2.7" fill="none" stroke="#222" stroke-width="0.9"/><path d="M18.70 9.20L24.70 1.80" stroke="#222" stroke-width="0.9"/><text x="26.80" y="8.45" font-size="8.2" fill="#222" stroke="#222" stroke-width="0.3" font-weight="normal" letter-spacing="0.35">0.1</text><text x="46.08" y="8.45" font-size="8.2" text-anchor="middle" fill="#222" stroke="#222" stroke-width="0.3" font-weight="normal" letter-spacing="0">J</text><text x="56.13" y="8.45" font-size="8.2" text-anchor="middle" fill="#222" stroke="#222" stroke-width="0.3" font-weight="normal" letter-spacing="0">C</text></svg></div>
<div class="tx b" style="left:106.70px;top:314.25px;color:#222;letter-spacing:-0.291px;">Position 17</div>
<div class="abs" style="left:144.00px;top:313.65px;"><svg width="6" height="6" viewBox="0 0 6 6"><path d="M0.6 5.4L1 3.8L3.8 0.8L5.2 2.2L2.2 5Z" fill="none" stroke="#333" stroke-width=".7" stroke-linejoin="round"/><path d="M3 1.8L4.2 3" stroke="#333" stroke-width=".5"/></svg></div>
<div class="abs" style="left:14.00px;top:325.80px;"><svg width="5" height="5" viewBox="0 0 5 5"><path d="M4.2 0.6V4.2H0.6Z" fill="#333"/></svg></div>
<svg class="cb" style="left:22.80px;top:324.50px" width="7.600" height="7.600" viewBox="0 0 7.600 7.600"><rect x="0.450" y="0.450" width="6.700" height="6.700" fill="#fff" stroke="#8a8a8a" stroke-width=".7"/><path d="M1.700 3.900L3.200 5.500L6.100 1.700" fill="none" stroke="#1a1a1a" stroke-width="1.050"/></svg>
<div class="abs" style="left:34.00px;top:324.90px;"><svg width="7.0" height="7.0" viewBox="0 0 7 7"><path d="M0.700 1.900L6.300 0.500V5.500L0.700 6.800Z" fill="#b98a1c" stroke="#8f6a12" stroke-width=".5"/></svg></div>
<div class="tx b" style="left:43.60px;top:325.90px;letter-spacing:-0.188px;">2_321</div>
<div class="abs" style="left:64.70px;top:323.40px;"><svg width="10" height="10" viewBox="0 0 10 10"><rect x="0.5" y="0.5" width="9" height="9" fill="#fff" stroke="#3c3c3c" stroke-width=".7"/><text x="5" y="7.4" font-size="6.6" text-anchor="middle" fill="#6a6a6a">H</text></svg></div>
<svg class="cb" style="left:33.10px;top:336.25px" width="7.600" height="7.600" viewBox="0 0 7.600 7.600"><rect x="0.450" y="0.450" width="6.700" height="6.700" fill="#fff" stroke="#8a8a8a" stroke-width=".7"/><path d="M1.700 3.900L3.200 5.500L6.100 1.700" fill="none" stroke="#1a1a1a" stroke-width="1.050"/></svg>
<div class="abs" style="left:43.50px;top:336.65px;"><svg width="8" height="7" viewBox="0 0 8 7"><rect x="0.600" y="0.700" width="3.400" height="4" rx=".6" fill="#eda3ad"/><rect x="3.300" y="2.300" width="3.600" height="4.100" rx=".6" fill="#eda3ad"/><path d="M3.300 0.900V4.500" stroke="#e58a96" stroke-width=".6"/></svg></div>
<div class="tx b" style="left:54.00px;top:337.65px;letter-spacing:-0.113px;">Measurement Point Set 5</div>
<div class="abs" style="left:14.00px;top:349.30px;"><svg width="5" height="5" viewBox="0 0 5 5"><path d="M4.2 0.6V4.2H0.6Z" fill="#333"/></svg></div>
<svg class="cb" style="left:22.80px;top:348.00px" width="7.600" height="7.600" viewBox="0 0 7.600 7.600"><rect x="0.450" y="0.450" width="6.700" height="6.700" fill="#fff" stroke="#8a8a8a" stroke-width=".7"/><path d="M1.700 3.900L3.200 5.500L6.100 1.700" fill="none" stroke="#1a1a1a" stroke-width="1.050"/></svg>
<div class="abs" style="left:33.50px;top:347.90px;"><svg width="8.0" height="8.0" viewBox="0 0 8 8"><circle cx="4" cy="4" r="3.5" fill="#b98a1c" stroke="#7d5a0e" stroke-width=".6"/><circle cx="4" cy="4" r="1.9" fill="#e8b840"/></svg></div>
<div class="tx b" style="left:43.60px;top:349.40px;letter-spacing:-0.188px;">2_247</div>
<svg class="cb" style="left:33.10px;top:359.75px" width="7.600" height="7.600" viewBox="0 0 7.600 7.600"><rect x="0.450" y="0.450" width="6.700" height="6.700" fill="#fff" stroke="#8a8a8a" stroke-width=".7"/><path d="M1.700 3.900L3.200 5.500L6.100 1.700" fill="none" stroke="#1a1a1a" stroke-width="1.050"/></svg>
<div class="abs" style="left:43.50px;top:360.15px;"><svg width="7" height="7" viewBox="0 0 7 7"><ellipse cx="3.5" cy="3.5" rx="2.9" ry="2.5" fill="none" stroke="#d9737c" stroke-width=".7"/></svg></div>
<div class="tx b" style="left:54.00px;top:361.15px;letter-spacing:-0.113px;">Measurement Point Set 6</div>
<svg class="cb" style="left:33.10px;top:371.50px" width="7.600" height="7.600" viewBox="0 0 7.600 7.600"><rect x="0.450" y="0.450" width="6.700" height="6.700" fill="#fff" stroke="#8a8a8a" stroke-width=".7"/><path d="M1.700 3.900L3.200 5.500L6.100 1.700" fill="none" stroke="#1a1a1a" stroke-width="1.050"/></svg>
<div class="abs" style="left:43.10px;top:370.70px;"><svg width="68.50" height="11.00" viewBox="0 0 68.50 11.00"><rect x="0.50" y="0.50" width="67.00" height="10.00" fill="none" stroke="#222" stroke-width="1.0"/><path d="M16.80 0.50v10.00M47.50 0.50v10.00M57.60 0.50v10.00" stroke="#222" stroke-width="1.0"/><circle cx="8.65" cy="5.50" r="2.7" fill="none" stroke="#222" stroke-width="1.0"/><path d="M4.65 5.50h8.00M8.65 1.50v8.00" stroke="#222" stroke-width="1.0"/><text x="21.40" y="8.45" font-size="8.2" fill="#222" stroke="#222" stroke-width="0.3" font-weight="normal">S</text><circle cx="30.60" cy="5.50" r="2.7" fill="none" stroke="#222" stroke-width="0.9"/><path d="M27.60 9.20L33.60 1.80" stroke="#222" stroke-width="0.9"/><text x="34.40" y="8.45" font-size="8.2" fill="#222" stroke="#222" stroke-width="0.3" font-weight="normal" letter-spacing="0.35">0.5</text><text x="52.88" y="8.45" font-size="8.2" text-anchor="middle" fill="#222" stroke="#222" stroke-width="0.3" font-weight="normal" letter-spacing="0">A</text><text x="62.88" y="8.45" font-size="8.2" text-anchor="middle" fill="#222" stroke="#222" stroke-width="0.3" font-weight="normal" letter-spacing="0">C</text></svg></div>
<div class="tx b" style="left:114.00px;top:373.00px;color:#222;letter-spacing:-0.282px;">Position 1</div>
<div class="abs" style="left:147.60px;top:372.40px;"><svg width="6" height="6" viewBox="0 0 6 6"><path d="M0.6 5.4L1 3.8L3.8 0.8L5.2 2.2L2.2 5Z" fill="none" stroke="#333" stroke-width=".7" stroke-linejoin="round"/><path d="M3 1.8L4.2 3" stroke="#333" stroke-width=".5"/></svg></div>
<div class="abs" style="left:14.00px;top:384.55px;"><svg width="5" height="5" viewBox="0 0 5 5"><path d="M4.2 0.6V4.2H0.6Z" fill="#333"/></svg></div>
<svg class="cb" style="left:22.80px;top:383.25px" width="7.600" height="7.600" viewBox="0 0 7.600 7.600"><rect x="0.450" y="0.450" width="6.700" height="6.700" fill="#fff" stroke="#8a8a8a" stroke-width=".7"/><path d="M1.700 3.900L3.200 5.500L6.100 1.700" fill="none" stroke="#1a1a1a" stroke-width="1.050"/></svg>
<div class="abs" style="left:33.50px;top:383.15px;"><svg width="8.0" height="8.0" viewBox="0 0 8 8"><circle cx="4" cy="4" r="3.5" fill="#b98a1c" stroke="#7d5a0e" stroke-width=".6"/><circle cx="4" cy="4" r="1.9" fill="#e8b840"/></svg></div>
<div class="tx b" style="left:43.60px;top:384.65px;letter-spacing:-0.188px;">2_282</div>
<svg class="cb" style="left:33.10px;top:395.00px" width="7.600" height="7.600" viewBox="0 0 7.600 7.600"><rect x="0.450" y="0.450" width="6.700" height="6.700" fill="#fff" stroke="#8a8a8a" stroke-width=".7"/><path d="M1.700 3.900L3.200 5.500L6.100 1.700" fill="none" stroke="#1a1a1a" stroke-width="1.050"/></svg>
<div class="abs" style="left:43.50px;top:395.40px;"><svg width="7" height="7" viewBox="0 0 7 7"><ellipse cx="3.5" cy="3.5" rx="2.9" ry="2.5" fill="none" stroke="#d9737c" stroke-width=".7"/></svg></div>
<div class="tx b" style="left:54.00px;top:396.40px;letter-spacing:-0.113px;">Measurement Point Set 7</div>
<svg class="cb" style="left:33.10px;top:406.75px" width="7.600" height="7.600" viewBox="0 0 7.600 7.600"><rect x="0.450" y="0.450" width="6.700" height="6.700" fill="#fff" stroke="#8a8a8a" stroke-width=".7"/><path d="M1.700 3.900L3.200 5.500L6.100 1.700" fill="none" stroke="#1a1a1a" stroke-width="1.050"/></svg>
<div class="abs" style="left:43.10px;top:405.95px;"><svg width="87.80" height="11.00" viewBox="0 0 87.80 11.00"><rect x="0.50" y="0.50" width="86.30" height="10.00" fill="none" stroke="#222" stroke-width="1.0"/><path d="M16.80 0.50v10.00M47.50 0.50v10.00M57.60 0.50v10.00M76.80 0.50v10.00" stroke="#222" stroke-width="1.0"/><circle cx="8.65" cy="5.50" r="2.7" fill="none" stroke="#222" stroke-width="1.0"/><path d="M4.65 5.50h8.00M8.65 1.50v8.00" stroke="#222" stroke-width="1.0"/><text x="21.40" y="8.45" font-size="8.2" fill="#222" stroke="#222" stroke-width="0.3" font-weight="normal">S</text><circle cx="30.60" cy="5.50" r="2.7" fill="none" stroke="#222" stroke-width="0.9"/><path d="M27.60 9.20L33.60 1.80" stroke="#222" stroke-width="0.9"/><text x="34.40" y="8.45" font-size="8.2" fill="#222" stroke="#222" stroke-width="0.3" font-weight="normal" letter-spacing="0.35">0.5</text><text x="52.88" y="8.45" font-size="8.2" text-anchor="middle" fill="#222" stroke="#222" stroke-width="0.3" font-weight="normal" letter-spacing="0">A</text><text x="62.40" y="8.45" font-size="8.2" text-anchor="middle" fill="#222" stroke="#222" stroke-width="0.3" font-weight="normal">B</text><circle cx="71.40" cy="5.50" r="4.3" fill="none" stroke="#222" stroke-width="0.9"/><text x="71.40" y="7.71" font-size="6.56" text-anchor="middle" fill="#222" stroke="#222" stroke-width="0.3" font-weight="normal">L</text><text x="82.13" y="8.45" font-size="8.2" text-anchor="middle" fill="#222" stroke="#222" stroke-width="0.3" font-weight="normal" letter-spacing="0">C</text></svg></div>
<div class="tx b" style="left:132.80px;top:408.25px;color:#222;letter-spacing:-0.260px;">Position 2</div>
<div class="abs" style="left:14.00px;top:419.80px;"><svg width="5" height="5" viewBox="0 0 5 5"><path d="M4.2 0.6V4.2H0.6Z" fill="#333"/></svg></div>
<svg class="cb" style="left:22.80px;top:418.50px" width="7.600" height="7.600" viewBox="0 0 7.600 7.600"><rect x="0.450" y="0.450" width="6.700" height="6.700" fill="#fff" stroke="#8a8a8a" stroke-width=".7"/><path d="M1.700 3.900L3.200 5.500L6.100 1.700" fill="none" stroke="#1a1a1a" stroke-width="1.050"/></svg>
<div class="abs" style="left:34.00px;top:418.90px;"><svg width="7.0" height="7.0" viewBox="0 0 7 7"><path d="M0.700 1.900L6.300 0.500V5.500L0.700 6.800Z" fill="#b98a1c" stroke="#8f6a12" stroke-width=".5"/></svg></div>
<div class="tx b" style="left:43.60px;top:419.90px;letter-spacing:-0.188px;">2_212</div>
<div class="abs" style="left:65.00px;top:418.80px;"><svg width="7.6" height="6.6499999999999995" viewBox="0 0 8 7"><path d="M4 0.4L7.6 6.6H0.4Z" fill="#f5b82e"/><path d="M4 2.4V4.6M4 5.2V6" stroke="#5a3a00" stroke-width=".8"/></svg></div>
<svg class="cb" style="left:33.10px;top:430.25px" width="7.600" height="7.600" viewBox="0 0 7.600 7.600"><rect x="0.450" y="0.450" width="6.700" height="6.700" fill="#fff" stroke="#8a8a8a" stroke-width=".7"/><path d="M1.700 3.900L3.200 5.500L6.100 1.700" fill="none" stroke="#1a1a1a" stroke-width="1.050"/></svg>
<div class="abs" style="left:43.50px;top:430.65px;"><svg width="8" height="7" viewBox="0 0 8 7"><rect x="0.600" y="0.700" width="3.400" height="4" rx=".6" fill="#eda3ad"/><rect x="3.300" y="2.300" width="3.600" height="4.100" rx=".6" fill="#eda3ad"/><path d="M3.300 0.900V4.500" stroke="#e58a96" stroke-width=".6"/></svg></div>
<div class="tx b" style="left:54.00px;top:431.65px;letter-spacing:-0.113px;">Measurement Point Set 8</div>
<div class="abs" style="left:133.30px;top:430.55px;"><svg width="7.6" height="6.6499999999999995" viewBox="0 0 8 7"><path d="M4 0.4L7.6 6.6H0.4Z" fill="#f5b82e"/><path d="M4 2.4V4.6M4 5.2V6" stroke="#5a3a00" stroke-width=".8"/></svg></div>
<svg class="cb" style="left:33.10px;top:442.00px" width="7.600" height="7.600" viewBox="0 0 7.600 7.600"><rect x="0.450" y="0.450" width="6.700" height="6.700" fill="#fff" stroke="#8a8a8a" stroke-width=".7"/><path d="M1.700 3.900L3.200 5.500L6.100 1.700" fill="none" stroke="#1a1a1a" stroke-width="1.050"/></svg>
<div class="abs" style="left:43.10px;top:441.20px;"><svg width="63.20" height="11.00" viewBox="0 0 63.20 11.00"><rect x="0.50" y="0.50" width="61.70" height="10.00" fill="none" stroke="#222" stroke-width="1.0"/><path d="M14.80 0.50v10.00M32.90 0.50v10.00M42.40 0.50v10.00" stroke="#222" stroke-width="1.0"/><circle cx="7.65" cy="5.50" r="2.7" fill="none" stroke="#222" stroke-width="1.0"/><path d="M3.65 5.50h8.00M7.65 1.50v8.00" stroke="#222" stroke-width="1.0"/><text x="24.59" y="8.45" font-size="8.2" text-anchor="middle" fill="#222" stroke="#222" stroke-width="0.3" font-weight="normal" letter-spacing="0.4">0.5</text><text x="37.98" y="8.45" font-size="8.2" text-anchor="middle" fill="#222" stroke="#222" stroke-width="0.3" font-weight="normal" letter-spacing="0">H</text><text x="47.20" y="8.45" font-size="8.2" text-anchor="middle" fill="#222" stroke="#222" stroke-width="0.3" font-weight="normal">G</text><circle cx="56.80" cy="5.50" r="4.3" fill="none" stroke="#222" stroke-width="0.9"/><text x="56.80" y="7.71" font-size="6.56" text-anchor="middle" fill="#222" stroke="#222" stroke-width="0.3" font-weight="normal">M</text></svg></div>
<div class="tx b" style="left:108.00px;top:443.50px;color:#222;letter-spacing:-0.063px;">Position 4 (1/2)</div>
<div class="abs" style="left:158.50px;top:442.90px;"><svg width="6" height="6" viewBox="0 0 6 6"><path d="M0.6 5.4L1 3.8L3.8 0.8L5.2 2.2L2.2 5Z" fill="none" stroke="#333" stroke-width=".7" stroke-linejoin="round"/><path d="M3 1.8L4.2 3" stroke="#333" stroke-width=".5"/></svg></div>
</div></div>
<div class="abs" style="left:179px;top:44px;width:8.200px;height:406.500px;background:#f0f0f0"></div>
<div class="abs" style="left:179.300px;top:54px;width:7.600px;height:346px;background:#fff;border:0.600px solid #b4b4b4"></div>
<div class="abs" style="left:179.300px;top:44.500px;width:7.600px;height:8.500px;background:#fff;border:0.600px solid #b4b4b4"></div>
<div class="abs" style="left:179.300px;top:441.500px;width:7.600px;height:8.500px;background:#fff;border:0.600px solid #b4b4b4"></div>
<div class="abs" style="left:181.00px;top:47.50px;"><svg width="5" height="4" viewBox="0 0 5 4"><path d="M0.600 3.200L2.500 0.800L4.400 3.200Z" fill="#333"/></svg></div>
<div class="abs" style="left:181.00px;top:444.50px;"><svg width="5" height="4" viewBox="0 0 5 4"><path d="M0.600 0.800L2.500 3.200L4.400 0.800Z" fill="#333"/></svg></div>
<div class="abs" style="left:0px;top:450.500px;width:20.4px;height:15px;background:#fff;border:0.800px solid #7f8fa8;border-top:none;color:#5a7cab;font-size:6.6px"><span class="abs" style="left:2.90px;top:4.800px;letter-spacing:-0.388px">Pla...</span></div>
<div class="abs" style="left:20.6px;top:451.500px;width:59px;height:13.500px;background:#fff;border:0.600px solid #c4c4c4;border-top:none;color:#555;font-size:6.6px;white-space:nowrap"><span class="abs" style="left:3.40px;top:3.800px;letter-spacing:-0.264px">Characteristic Re...</span></div>
<div class="abs" style="left:80px;top:451.500px;width:21.3px;height:13.500px;background:#fff;border:0.600px solid #c4c4c4;border-top:none;color:#555;font-size:6.6px;white-space:nowrap"><span class="abs" style="left:3.20px;top:3.800px;letter-spacing:-0.391px">DM...</span></div>
<div class="abs" style="left:101.6px;top:451.500px;width:37.4px;height:13.500px;background:#fff;border:0.600px solid #c4c4c4;border-top:none;color:#555;font-size:6.6px;white-space:nowrap"><span class="abs" style="left:3.70px;top:3.800px;letter-spacing:-0.291px">Semantic...</span></div>
<div class="abs" style="left:140px;top:451.500px;width:37.8px;height:13.500px;background:#fff;border:0.600px solid #c4c4c4;border-top:none;color:#555;font-size:6.6px;white-space:nowrap"><span class="abs" style="left:3.10px;top:3.800px;letter-spacing:-0.286px">Graphical...</span></div>
</div>
<div id="props" class="abs" style="left:193px;top:74px;width:150.500px;height:465.500px;background:#fff;border:0.800px solid #c8c8c8;border-top:none">
<div class="abs phead" style="left:0;top:0;width:150px;background:#e1e1e1;color:#444"><span style="left:2.8px;letter-spacing:-0.42px">Properties View</span><svg class="abs" style="left:117px;top:2px" width="33" height="10" viewBox="0 0 33 10"><path d="M1 3.400h4.400l-2.200 2.800z" fill="#333"/><path d="M13 1.600h2.600v3.400h-2.600zM12 5h4.600M14.300 5v3.400" stroke="#333" stroke-width=".8" fill="none"/><path d="M23 2.400l4.600 4.600m0 -4.600l-4.600 4.600" stroke="#222" stroke-width="1.200"/></svg></div>
<div class="abs" style="left:0.30px;top:14.30px;width:149.00px;height:14.70px;background:#f0f0f0"></div>
<div class="abs" style="left:3.50px;top:18.80px;"><svg width="10" height="10" viewBox="0 0 10 10"><circle cx="4.800" cy="4.800" r="4.300" fill="#fff" stroke="#444" stroke-width=".7"/><path d="M2.900 5.700L4.800 3.700L6.700 5.700" fill="none" stroke="#222" stroke-width="1"/></svg></div>
<div class="tx" style="left:16.30px;top:20.45px;font-size:6.9px;color:#333;letter-spacing:-0.3px;transform:scaleX(0.932);transform-origin:0 50%;">Preview</div>
<div class="abs" style="left:14.10px;top:32.10px;"><svg width="118" height="16" viewBox="0 0 118 16"><g fill="none" stroke="#222" stroke-width="1.100"><rect x="0.600" y="0.800" width="58.200" height="13.700"/><path d="M21.600 0.800v13.700M45.600 0.800v13.700"/><circle cx="11.100" cy="7.650" r="3.400"/><path d="M5.400 7.650h11.400M11.100 2.200v10.900"/><path d="M70.700 0.800H105.200L113.800 7.650L105.200 14.500H70.700L61.800 7.650ZM70.700 0.800v13.700M91.600 0.800v13.700M105.200 0.800v13.700"/><path d="M76 13L82.300 2.200M80.800 13L87.100 2.200"/></g><text x="33.700" y="11.800" font-size="11.400" text-anchor="middle" fill="#222" stroke="#222" stroke-width=".12" letter-spacing="0.300">0.1</text><text x="52.200" y="11.800" font-size="11.400" text-anchor="middle" fill="#222" stroke="#222" stroke-width=".12">A</text><text x="98.400" y="11.800" font-size="11.400" text-anchor="middle" fill="#222" stroke="#222" stroke-width=".12">A</text></svg></div>
<div class="abs" style="left:131.80px;top:36.80px;"><svg width="6" height="6" viewBox="0 0 6 6"><path d="M0.6 5.4L1 3.8L3.8 0.8L5.2 2.2L2.2 5Z" fill="none" stroke="#333" stroke-width=".7" stroke-linejoin="round"/><path d="M3 1.8L4.2 3" stroke="#333" stroke-width=".5"/></svg></div>
<div class="abs" style="left:0.30px;top:51.80px;width:149.00px;height:11.80px;background:#f0f0f0"></div>
<div class="abs" style="left:3.50px;top:53.40px;"><svg width="10" height="10" viewBox="0 0 10 10"><circle cx="4.800" cy="4.800" r="4.300" fill="#fff" stroke="#444" stroke-width=".7"/><path d="M2.900 5.700L4.800 3.700L6.700 5.700" fill="none" stroke="#222" stroke-width="1"/></svg></div>
<div class="tx" style="left:16.30px;top:55.05px;font-size:6.9px;color:#333;letter-spacing:-0.3px;transform:scaleX(0.952);transform-origin:0 50%;">Tolerance</div>
<div class="tx" style="left:12.90px;top:68.20px;letter-spacing:-0.238px;">Tolerance value</div>
<div class="abs" style="left:87.50px;top:65.90px;width:61.00px;height:9.00px;border:0.700px solid #b4b4b4;background:#fff"></div>
<div class="tx" style="left:89.30px;top:67.90px;">0,1</div>
<div class="tx" style="left:12.90px;top:79.10px;letter-spacing:-0.049px;">Material modifier</div>
<div class="tx" style="left:92.30px;top:78.10px;letter-spacing:-0.126px;">None</div>
<div class="abs" style="left:142.60px;top:80.90px;"><svg width="4" height="3" viewBox="0 0 4 3"><path d="M0.300 0.400H3.700L2 2.600Z" fill="#222"/></svg></div>
<div class="tx" style="left:12.90px;top:91.00px;letter-spacing:-0.146px;">Statistical tolerance</div>
<div class="abs" style="left:87.70px;top:90.30px;width:7.20px;height:7.20px;border:0.700px solid #aaa;background:#fff"></div>
<div class="abs" style="left:97.30px;top:90.50px;"><svg width="11" height="7" viewBox="0 0 11 7"><path d="M2.400 0.500H8.600L10.500 3.500L8.600 6.500H2.400L0.500 3.500Z" fill="#fff" stroke="#666" stroke-width=".6"/><text x="5.500" y="5" font-size="4.200" text-anchor="middle" fill="#555">ST</text></svg></div>
<div class="tx" style="left:12.90px;top:102.90px;letter-spacing:-0.236px;">Tolerance zone shape</div>
<div class="tx" style="left:92.30px;top:101.70px;letter-spacing:-0.336px;">Planar</div>
<div class="abs" style="left:142.60px;top:104.70px;"><svg width="4" height="3" viewBox="0 0 4 3"><path d="M0.300 0.400H3.700L2 2.600Z" fill="#222"/></svg></div>
<div class="tx" style="left:12.90px;top:115.80px;letter-spacing:-0.137px;">Tolerance zone orientation</div>
<div class="abs" style="left:89.30px;top:114.50px;"><svg width="33" height="9" viewBox="0 0 33 9"><g fill="none" stroke="#222" stroke-width=".7"><path d="M6 0.600H26.800L32.300 4.400L26.800 8.200H6L0.600 4.400ZM6 0.600v7.600M18.400 0.600v7.600M26.800 0.600v7.600"/><path d="M8.800 7.400L12.600 1.400M11.800 7.400L15.600 1.400"/></g><text x="22.600" y="6.800" font-size="6.600" text-anchor="middle" fill="#222" stroke="#222" stroke-width=".12">A</text></svg></div>
<div class="abs" style="left:142.60px;top:117.60px;"><svg width="4" height="3" viewBox="0 0 4 3"><path d="M0.300 0.400H3.700L2 2.600Z" fill="#222"/></svg></div>
<div class="tx b" style="left:6.30px;top:126.00px;letter-spacing:-0.261px;">Datums</div>
<div class="tx" style="left:12.90px;top:137.00px;letter-spacing:-0.222px;">Primary</div>
<div class="tx" style="left:87.90px;top:137.50px;">A</div>
<div class="abs" style="left:111.60px;top:138.80px;"><svg width="4" height="3" viewBox="0 0 4 3"><path d="M0.300 0.400H3.700L2 2.600Z" fill="#222"/></svg></div>
<div class="tx" style="left:122.30px;top:136.00px;letter-spacing:-0.3px;transform:scaleX(0.975);transform-origin:0 50%;">None</div>
<div class="abs" style="left:142.60px;top:138.80px;"><svg width="4" height="3" viewBox="0 0 4 3"><path d="M0.300 0.400H3.700L2 2.600Z" fill="#222"/></svg></div>
<div class="tx" style="left:12.90px;top:148.50px;letter-spacing:-0.319px;">Secondary</div>
<div class="abs" style="left:111.60px;top:150.30px;"><svg width="4" height="3" viewBox="0 0 4 3"><path d="M0.300 0.400H3.700L2 2.600Z" fill="#222"/></svg></div>
<div class="abs" style="left:118.60px;top:146.30px;width:29.20px;height:20.00px;background:#dcdcdc"></div>
<div class="tx" style="left:12.90px;top:159.50px;letter-spacing:-0.148px;">Tertiary</div>
<div class="abs" style="left:86.90px;top:156.80px;width:29.80px;height:9.50px;background:#dcdcdc"></div>
<div class="abs" style="left:0.30px;top:168.30px;width:149.00px;height:10.60px;background:#f0f0f0"></div>
<div class="abs" style="left:3.50px;top:169.30px;"><svg width="10" height="10" viewBox="0 0 10 10"><circle cx="4.800" cy="4.800" r="4.300" fill="#fff" stroke="#444" stroke-width=".7"/><path d="M2.900 5.700L4.800 3.700L6.700 5.700" fill="none" stroke="#222" stroke-width="1"/></svg></div>
<div class="tx" style="left:16.30px;top:171.05px;font-size:6.9px;color:#333;letter-spacing:-0.376px;">Settings</div>
<div class="abs" style="left:3.90px;top:189.40px;width:144.60px;height:0.60px;background:#dedede"></div>
<div class="abs" style="left:3.90px;top:201.30px;width:144.60px;height:0.60px;background:#dedede"></div>
<div class="abs" style="left:3.90px;top:213.10px;width:144.60px;height:0.60px;background:#dedede"></div>
<div class="abs" style="left:3.90px;top:225.00px;width:144.60px;height:0.60px;background:#dedede"></div>
<div class="abs" style="left:3.90px;top:237.00px;width:144.60px;height:0.60px;background:#dedede"></div>
<div class="abs" style="left:3.90px;top:248.60px;width:144.60px;height:0.60px;background:#dedede"></div>
<div class="abs" style="left:3.70px;top:178.90px;width:0.60px;height:70.00px;background:#dedede"></div>
<div class="abs" style="left:83.50px;top:178.90px;width:0.60px;height:70.00px;background:#dedede"></div>
<div class="tx" style="left:10.30px;top:181.40px;letter-spacing:-0.355px;">Evaluate</div>
<div class="tx" style="left:10.30px;top:193.20px;letter-spacing:-0.3px;transform:scaleX(0.982);transform-origin:0 50%;">Name</div>
<div class="tx" style="left:10.30px;top:204.60px;letter-spacing:-0.217px;">Balloon ID</div>
<div class="tx" style="left:10.30px;top:217.30px;letter-spacing:-0.048px;">Fitting method</div>
<div class="tx" style="left:10.30px;top:229.20px;letter-spacing:-0.121px;">Report to statistic</div>
<div class="tx" style="left:10.30px;top:240.60px;letter-spacing:-0.177px;">Exit on fail</div>
<div class="abs" style="left:84.90px;top:180.50px;"><svg width="7.600" height="7.600" viewBox="0 0 7.600 7.600"><rect x="0.450" y="0.450" width="6.700" height="6.700" fill="#fff" stroke="#999" stroke-width=".7"/><path d="M1.700 3.900L3.200 5.500L6.100 1.700" fill="none" stroke="#1a1a1a" stroke-width="1.050"/></svg></div>
<div class="abs" style="left:84.90px;top:191.50px;width:63.00px;height:8.60px;border:0.700px solid #b4b4b4;background:#fff"></div>
<div class="tx" style="left:86.70px;top:193.40px;letter-spacing:-0.265px;">Position 6</div>
<div class="abs" style="left:84.90px;top:203.30px;width:63.00px;height:8.60px;border:0.700px solid #b4b4b4;background:#fff"></div>
<div class="tx" style="left:85.70px;top:217.30px;letter-spacing:-0.322px;">Least squares</div>
<div class="abs" style="left:142.60px;top:219.10px;"><svg width="4" height="3" viewBox="0 0 4 3"><path d="M0.300 0.400H3.700L2 2.600Z" fill="#222"/></svg></div>
<div class="abs" style="left:84.90px;top:228.30px;width:7.20px;height:7.20px;border:0.700px solid #aaa;background:#fff"></div>
<div class="abs" style="left:84.90px;top:239.80px;width:7.20px;height:7.20px;border:0.700px solid #aaa;background:#fff"></div>
</div>
<div class="abs" style="left:346px;top:74px;width:530px;height:14px;background:#fff"></div>
<div class="abs phead" style="left:346px;top:74px;width:30px;background:#e1e1e1;color:#444"><span style="left:3px;letter-spacing:-0.45px">3D View</span></div>
<svg class="abs" style="left:864px;top:76px" width="10" height="10" viewBox="0 0 10 10"><path d="M2.400 2.400l4.800 4.800m0 -4.800l-4.800 4.800" stroke="#222" stroke-width="1.200"/></svg>
<div class="abs" style="left:345.500px;top:88px;width:529.500px;height:451.500px;background:#fff;border:0.800px solid #c4c4c4"></div>
<svg class="abs" style="left:347.5px;top:89.5px;overflow:hidden" width="525" height="448.5" viewBox="347.5 89.5 525 448.5">
<defs>
<linearGradient id="bg" x1="0" y1="0" x2="0" y2="1"><stop offset="0" stop-color="#007f7b"/><stop offset=".5" stop-color="#72b9b0"/><stop offset=".82" stop-color="#d7e9d9"/><stop offset="1" stop-color="#fdf8e6"/></linearGradient>
<linearGradient id="colg" x1="0" y1="0" x2="1" y2="0"><stop offset="0" stop-color="#fff"/><stop offset=".25" stop-color="#f4f4f4"/><stop offset=".6" stop-color="#9a9a9a"/><stop offset="1" stop-color="#484848"/></linearGradient>
<linearGradient id="beam" x1="0" y1="0" x2="0" y2="1"><stop offset="0" stop-color="#cbcbcb"/><stop offset=".67" stop-color="#d3d3d3"/><stop offset=".76" stop-color="#fbfbfb"/><stop offset="1" stop-color="#fff"/></linearGradient>
<radialGradient id="sph" cx=".32" cy=".72" r=".75"><stop offset="0" stop-color="#fff"/><stop offset=".25" stop-color="#e4e6ee"/><stop offset=".6" stop-color="#aeb2c2"/><stop offset="1" stop-color="#8d91a3"/></radialGradient>
<linearGradient id="pink" x1="0" y1="0" x2="1" y2="0"><stop offset="0" stop-color="#e9c3c3"/><stop offset=".12" stop-color="#f6dede"/><stop offset=".45" stop-color="#d9a9a9"/><stop offset=".8" stop-color="#c99696"/><stop offset="1" stop-color="#b98686"/></linearGradient>
<linearGradient id="cyl" x1="0" y1="0" x2="1" y2="0"><stop offset="0" stop-color="#777"/><stop offset=".14" stop-color="#c4c4c4"/><stop offset=".36" stop-color="#ffffff"/><stop offset=".5" stop-color="#e2e2e2"/><stop offset=".72" stop-color="#8c8c8c"/><stop offset=".9" stop-color="#444"/><stop offset="1" stop-color="#2c2c2c"/></linearGradient>
<linearGradient id="stem" x1="0" y1="0" x2="1" y2="0"><stop offset="0" stop-color="#222"/><stop offset=".45" stop-color="#777"/><stop offset="1" stop-color="#1a1a1a"/></linearGradient>
<linearGradient id="hole" x1="0" y1="0" x2="1" y2="0"><stop offset="0" stop-color="#5a5d68"/><stop offset=".18" stop-color="#b4b6c0"/><stop offset=".4" stop-color="#f6f6f8"/><stop offset="1" stop-color="#ffffff"/></linearGradient>
</defs>
<rect x="347.5" y="89.5" width="525" height="448.5" fill="url(#bg)"/>
<g transform="translate(-1.700 0) skewX(0.985)">
<rect x="619.500" y="89" width="21" height="448" fill="#fff"/>
<rect x="640.500" y="89" width="10.300" height="448" fill="#c9c9c9"/>
<rect x="650.800" y="89" width="20.400" height="448" fill="#fff"/>
<rect x="671" y="89" width="10" height="448" fill="url(#colg)"/>
<rect x="680.800" y="89" width="4" height="448" fill="#4c4c4c"/>
<rect x="684.600" y="89" width="4.600" height="448" fill="#373737"/>
</g>
<path d="M676 152L694 147.200L742 151.800L872 153.800V156H676Z" fill="#a9a9a9"/>
<path d="M593 150.900Q587.500 150.900 586.300 154.500L575.300 195.500Q574.800 198.500 577 199.800L581 199.800L591 156Q592 153 596 152.600Z" fill="#1e1e1e"/>
<path d="M594 152.300H872V212H594C584 211.500 579 207 578.200 197.500L589.800 155.500Q590.600 152.600 594 152.300Z" fill="url(#beam)"/>
<path d="M589 151.700H872" stroke="#555" stroke-width=".6"/>
<path d="M735.500 212.300H872V229H722Z" fill="#0c0c0c"/><path d="M727.800 222.400H872V223.600H726.800Z" fill="#8e8e8e"/><rect x="722.500" y="228" width="146" height="30.300" fill="#6e6e6e"/>
<text x="742.500" y="219.800" font-size="6.800" font-weight="bold" font-style="italic" fill="#fff" letter-spacing="0.950">RENISHAW</text>
<text x="859" y="219.600" font-size="4.600" font-style="italic" fill="#aaa">FCR25</text>
<rect x="867.500" y="227" width="5" height="31.300" fill="#111"/>
<rect x="722.500" y="227.800" width="47.200" height="30.500" rx="1.500" fill="#c3c3c3"/>
<rect x="771" y="227.800" width="47.400" height="30.500" rx="1.500" fill="#c3c3c3"/>
<rect x="819.800" y="227.800" width="47" height="30.500" rx="1.500" fill="#c3c3c3"/>
<path d="M722.500 255h144.300v3.300h-144.300z" fill="#b0b0b0" opacity=".5"/>
<path d="M784 258.300H821V310A18.500 3 0 0 1 784 310Z" fill="url(#cyl)"/>
<path d="M784.600 311A18 3 0 0 0 820.400 311L818 315.500A16 2.400 0 0 1 787 315.500Z" fill="#1c1c1c"/><path d="M797 316.500H808L807.500 322H800Z" fill="#2a2a2a"/>
<path d="M800 317H807.500L808.500 330L809 537H801L801.500 330Z" fill="url(#stem)"/>
<rect x="802" y="443" width="6.500" height="34" fill="#f2f2f2"/>
<path d="M832.800 258.300H869.600V333A18.400 3 0 0 1 832.800 333Z" fill="url(#cyl)"/>
<path d="M832.800 297A18.400 2.500 0 0 0 869.600 297" fill="none" stroke="#333" stroke-width=".7"/>
<path d="M833.400 334A18 3 0 0 0 869 334L866.500 338.500A16 2.400 0 0 1 836 338.500Z" fill="#1c1c1c"/><path d="M846 339.500H859L858.500 345H848Z" fill="#2a2a2a"/>
<path d="M847.500 340H858L858.500 352L859 537H849L848.500 352Z" fill="url(#stem)"/>
<path d="M375.200 309.500L443 289.500L648.700 293.400L583 312.500Z" fill="#3b3e48"/>
<path d="M583 312L648.700 293.200L648.600 330L653 509L587 528.700Z" fill="#30333d"/>
<path d="M627 520.600H674Q680 521 680 527V535H588L588.600 531Z" fill="#3d3d3d"/>
<path d="M588 534.500H695V536H588Z" fill="#1a1a1a"/>
<path d="M375.200 309.500L583 312L585.500 529.600L379 527Z" fill="#fff"/>
<ellipse cx="470" cy="294" rx="25.600" ry="3.500" fill="url(#hole)"/>

<circle cx="480" cy="419.500" r="28" fill="#30333d"/>
<path d="M403 305.500A21.300 21 0 0 1 445.600 305.500A21.300 3.600 0 0 1 403 305.500Z" fill="url(#sph)"/>
<path d="M575.600 295A18.300 21 0 0 1 612.200 295A18.300 3 0 0 1 575.600 295Z" fill="url(#sph)"/>
<path d="M526.500 278V308.500A25 3.300 0 0 0 576.500 308.500V278Z" fill="url(#pink)"/>
<ellipse cx="551.500" cy="278" rx="25" ry="2.600" fill="#c9a3a3" stroke="#2a3a9a" stroke-width=".9"/>
<path d="M526.500 307A25 3.300 0 0 0 576.500 307" fill="none" stroke="#fff" stroke-width=".5" stroke-dasharray="1.500 1" opacity=".9"/>
<g fill="none" stroke="#0a3fc8" stroke-width=".9"><path d="M527.400 154H519.300L466.400 295.500"/><path d="M446.400 263.500H438.400L428.800 284.500"/><path d="M694.400 252.200H689L594.600 272.600"/><path d="M536 277.500L594.600 272.800L625 270"/><path d="M625 261V269"/></g>
<circle cx="428.800" cy="284.800" r="1.100" fill="#0a3fc8"/><circle cx="594.600" cy="272.700" r="1.100" fill="#0a3fc8"/><path d="M622.600 271.300h4.800l-2.400 -2.600z" fill="#0a3fc8"/>
<g transform="translate(526.600 148.200)"><svg width="57.40" height="10.50" viewBox="0 0 57.40 10.50"><rect x="0.45" y="0.45" width="56.00" height="9.60" fill="#1f76d4" stroke="#0a3fc8" stroke-width="0.9"/><path d="M14.45 0.45v9.60M30.85 0.45v9.60M39.45 0.45v9.60" stroke="#0a3fc8" stroke-width="0.9"/><circle cx="7.45" cy="5.25" r="2.304878048780488" fill="none" stroke="#0a3fc8" stroke-width="0.9"/><path d="M4.04 5.25h6.83M7.45 1.84v6.83" stroke="#0a3fc8" stroke-width="0.9"/><text x="23.28" y="7.77" font-size="7" text-anchor="middle" fill="#0a3fc8" stroke="#0a3fc8" stroke-width="0.25" font-weight="normal" letter-spacing="0.4">0.5</text><text x="35.43" y="7.77" font-size="7" text-anchor="middle" fill="#0a3fc8" stroke="#0a3fc8" stroke-width="0.25" font-weight="normal" letter-spacing="0">H</text><text x="44.25" y="7.77" font-size="7" text-anchor="middle" fill="#0a3fc8" stroke="#0a3fc8" stroke-width="0.25" font-weight="normal">G</text><circle cx="51.05" cy="5.25" r="4.3" fill="none" stroke="#0a3fc8" stroke-width="0.81"/><text x="51.05" y="7.14" font-size="5.60" text-anchor="middle" fill="#0a3fc8" stroke="#0a3fc8" stroke-width="0.25" font-weight="normal">M</text></svg></g>
<g transform="translate(446 258.600)"><svg width="61.90" height="10.20" viewBox="0 0 61.90 10.20"><rect x="0.40" y="0.40" width="60.60" height="9.40" fill="none" stroke="#0a3fc8" stroke-width="0.8"/><path d="M13.60 0.40v9.40M42.20 0.40v9.40M51.60 0.40v9.40" stroke="#0a3fc8" stroke-width="0.8"/><circle cx="7.00" cy="5.10" r="2.304878048780488" fill="none" stroke="#0a3fc8" stroke-width="0.8"/><path d="M3.59 5.10h6.83M7.00 1.69v6.83" stroke="#0a3fc8" stroke-width="0.8"/><text x="17.53" y="7.62" font-size="7" fill="#0a3fc8" stroke="#0a3fc8" stroke-width="0.1" font-weight="normal">S</text><circle cx="25.38" cy="5.10" r="2.304878048780488" fill="none" stroke="#0a3fc8" stroke-width="0.7200000000000001"/><path d="M22.78 8.40L27.99 1.80" stroke="#0a3fc8" stroke-width="0.7200000000000001"/><text x="28.62" y="7.62" font-size="7" fill="#0a3fc8" stroke="#0a3fc8" stroke-width="0.1" font-weight="normal" letter-spacing="0.35">0.5</text><text x="47.18" y="7.62" font-size="7" text-anchor="middle" fill="#0a3fc8" stroke="#0a3fc8" stroke-width="0.1" font-weight="normal" letter-spacing="0">A</text><text x="56.58" y="7.62" font-size="7" text-anchor="middle" fill="#0a3fc8" stroke="#0a3fc8" stroke-width="0.1" font-weight="normal" letter-spacing="0">C</text></svg></g>
<g fill="none" stroke="#1a4fd0" stroke-width=".7" opacity=".9"><path d="M480.200 224.300l3.800 0.300l3 64.600l-3.800 -0.300z"/><path d="M480.700 233.500l3.800 0.300M481.500 250l3.800 0.300M482.100 263l3.800 0.300M482.600 274l3.800 0.300"/><circle cx="482.400" cy="229" r="1.300"/><circle cx="483" cy="239" r="1.200"/><path d="M481.800 242.500l3 3M483 246.500c1.500 .5 1.500 2 0 2.500"/><circle cx="484" cy="256.500" r="1.300"/><path d="M482.600 258.500l3 -3.500"/><circle cx="484.600" cy="268.500" r="1.300"/><circle cx="485" cy="279" r="1.300"/><circle cx="485.200" cy="284.500" r="1.300"/></g>
<g transform="translate(694.200 247)"><svg width="78.70" height="10.80" viewBox="0 0 78.70 10.80"><rect x="0.40" y="0.40" width="77.40" height="10.00" fill="none" stroke="#0a3fc8" stroke-width="0.8"/><path d="M14.00 0.40v10.00M42.40 0.40v10.00M51.80 0.40v10.00M68.80 0.40v10.00" stroke="#0a3fc8" stroke-width="0.8"/><circle cx="7.20" cy="5.40" r="2.304878048780488" fill="none" stroke="#0a3fc8" stroke-width="0.8"/><path d="M3.79 5.40h6.83M7.20 1.99v6.83" stroke="#0a3fc8" stroke-width="0.8"/><text x="17.93" y="7.92" font-size="7" fill="#0a3fc8" stroke="#0a3fc8" stroke-width="0.1" font-weight="normal">S</text><circle cx="25.78" cy="5.40" r="2.304878048780488" fill="none" stroke="#0a3fc8" stroke-width="0.7200000000000001"/><path d="M23.18 8.70L28.39 2.10" stroke="#0a3fc8" stroke-width="0.7200000000000001"/><text x="29.02" y="7.92" font-size="7" fill="#0a3fc8" stroke="#0a3fc8" stroke-width="0.1" font-weight="normal" letter-spacing="0.35">0.5</text><text x="47.38" y="7.92" font-size="7" text-anchor="middle" fill="#0a3fc8" stroke="#0a3fc8" stroke-width="0.1" font-weight="normal" letter-spacing="0">A</text><text x="56.60" y="7.92" font-size="7" text-anchor="middle" fill="#0a3fc8" stroke="#0a3fc8" stroke-width="0.1" font-weight="normal">B</text><circle cx="63.40" cy="5.40" r="4.3" fill="none" stroke="#0a3fc8" stroke-width="0.7200000000000001"/><text x="63.40" y="7.29" font-size="5.60" text-anchor="middle" fill="#0a3fc8" stroke="#0a3fc8" stroke-width="0.1" font-weight="normal">L</text><text x="73.58" y="7.92" font-size="7" text-anchor="middle" fill="#0a3fc8" stroke="#0a3fc8" stroke-width="0.1" font-weight="normal" letter-spacing="0">C</text></svg></g>
<rect x="620.700" y="252.300" width="8.600" height="8.700" fill="#fff" stroke="#0a3fc8" stroke-width=".8"/><text x="625" y="259.300" font-size="7" text-anchor="middle" fill="#0a3fc8">H</text>
<g opacity=".82">
<rect x="564.700" y="180.600" width="8.800" height="9.600" fill="none" stroke="#ffffff" stroke-width=".7"/><text x="569.100" y="187.900" font-size="6.800" text-anchor="middle" fill="#ffffff">G</text><path d="M569.100 190.200V197" stroke="#ffffff" stroke-width=".7"/><path d="M567.100 199.600h4l-2 -2.800z" fill="#ffffff"/>
<g transform="translate(542.700 199.7)"><svg width="38.20" height="10.50" viewBox="0 0 38.20 10.50"><rect x="0.35" y="0.35" width="37.00" height="9.80" fill="none" stroke="#ffffff" stroke-width="0.7"/><path d="M13.35 0.35v9.80" stroke="#ffffff" stroke-width="0.7"/><circle cx="6.85" cy="5.25" r="2.304878048780488" fill="none" stroke="#ffffff" stroke-width="0.7"/><path d="M3.44 5.25h6.83M6.85 1.84v6.83" stroke="#ffffff" stroke-width="0.7"/><circle cx="18.90" cy="5.25" r="2.304878048780488" fill="none" stroke="#ffffff" stroke-width="0.63"/><path d="M16.29 8.55L21.50 1.95" stroke="#ffffff" stroke-width="0.63"/><text x="23.25" y="7.77" font-size="7" fill="#ffffff" font-weight="normal" letter-spacing="0.35">0.1</text></svg></g>
<g transform="translate(542.700 209.5)"><svg width="47.00" height="10.50" viewBox="0 0 47.00 10.50"><rect x="0.35" y="0.35" width="45.80" height="9.80" fill="none" stroke="#ffffff" stroke-width="0.7"/><path d="M13.35 0.35v9.80M37.35 0.35v9.80" stroke="#ffffff" stroke-width="0.7"/><circle cx="6.85" cy="5.25" r="2.304878048780488" fill="none" stroke="#ffffff" stroke-width="0.7"/><path d="M3.44 5.25h6.83M6.85 1.84v6.83" stroke="#ffffff" stroke-width="0.7"/><circle cx="18.90" cy="5.25" r="2.304878048780488" fill="none" stroke="#ffffff" stroke-width="0.63"/><path d="M16.29 8.55L21.50 1.95" stroke="#ffffff" stroke-width="0.63"/><text x="23.25" y="7.77" font-size="7" fill="#ffffff" font-weight="normal" letter-spacing="0.35">0.1</text><text x="42.03" y="7.77" font-size="7" text-anchor="middle" fill="#ffffff" font-weight="normal" letter-spacing="0">J</text></svg></g>
<g transform="translate(542.700 219.3)"><svg width="73.80" height="10.50" viewBox="0 0 73.80 10.50"><rect x="0.35" y="0.35" width="39.00" height="9.80" fill="none" stroke="#ffffff" stroke-width="0.7"/><path d="M13.35 0.35v9.80M30.35 0.35v9.80" stroke="#ffffff" stroke-width="0.7"/><circle cx="6.85" cy="5.25" r="2.304878048780488" fill="none" stroke="#ffffff" stroke-width="0.7"/><path d="M3.44 5.25h6.83M6.85 1.84v6.83" stroke="#ffffff" stroke-width="0.7"/><text x="22.48" y="7.77" font-size="7" text-anchor="middle" fill="#ffffff" font-weight="normal" letter-spacing="0.4">0.1</text><text x="35.13" y="7.77" font-size="7" text-anchor="middle" fill="#ffffff" font-weight="normal" letter-spacing="0">B</text><path d="M46.35 0.35H68.35L72.95 5.25L68.35 10.15H46.35L40.35 5.25Z M46.35 0.35V10.15 M58.75 0.35V10.15 M68.35 0.35V10.15" fill="none" stroke="#ffffff" stroke-width="0.7" stroke-linejoin="miter"/><path d="M47.75 9.05h9.60M52.55 9.05V2.35" stroke="#ffffff" stroke-width="0.7"/><text x="63.55" y="7.77" font-size="7" text-anchor="middle" fill="#ffffff" font-weight="normal">B</text></svg></g>
<g transform="translate(542.700 229.1)"><svg width="73.80" height="10.50" viewBox="0 0 73.80 10.50"><rect x="0.35" y="0.35" width="39.00" height="9.80" fill="none" stroke="#ffffff" stroke-width="0.7"/><path d="M13.35 0.35v9.80M30.35 0.35v9.80" stroke="#ffffff" stroke-width="0.7"/><circle cx="6.85" cy="5.25" r="2.304878048780488" fill="none" stroke="#ffffff" stroke-width="0.7"/><path d="M3.44 5.25h6.83M6.85 1.84v6.83" stroke="#ffffff" stroke-width="0.7"/><text x="22.48" y="7.77" font-size="7" text-anchor="middle" fill="#ffffff" font-weight="normal" letter-spacing="0.4">0.1</text><text x="35.13" y="7.77" font-size="7" text-anchor="middle" fill="#ffffff" font-weight="normal" letter-spacing="0">C</text><path d="M46.35 0.35H68.35L72.95 5.25L68.35 10.15H46.35L40.35 5.25Z M46.35 0.35V10.15 M58.75 0.35V10.15 M68.35 0.35V10.15" fill="none" stroke="#ffffff" stroke-width="0.7" stroke-linejoin="miter"/><path d="M47.75 9.05h9.60M52.55 9.05V2.35" stroke="#ffffff" stroke-width="0.7"/><text x="63.55" y="7.77" font-size="7" text-anchor="middle" fill="#ffffff" font-weight="normal">C</text></svg></g>
<g transform="translate(542.700 248.7)"><svg width="47.60" height="10.50" viewBox="0 0 47.60 10.50"><rect x="0.35" y="0.35" width="46.40" height="9.80" fill="none" stroke="#ffffff" stroke-width="0.7"/><path d="M13.35 0.35v9.80M37.35 0.35v9.80" stroke="#ffffff" stroke-width="0.7"/><circle cx="6.85" cy="5.25" r="2.304878048780488" fill="none" stroke="#ffffff" stroke-width="0.7"/><path d="M3.44 5.25h6.83M6.85 1.84v6.83" stroke="#ffffff" stroke-width="0.7"/><circle cx="18.90" cy="5.25" r="2.304878048780488" fill="none" stroke="#ffffff" stroke-width="0.63"/><path d="M16.29 8.55L21.50 1.95" stroke="#ffffff" stroke-width="0.63"/><text x="23.25" y="7.77" font-size="7" fill="#ffffff" font-weight="normal" letter-spacing="0.35">0.2</text><text x="42.33" y="7.77" font-size="7" text-anchor="middle" fill="#ffffff" font-weight="normal" letter-spacing="0">A</text></svg></g>
<text x="549.500" y="266.600" font-size="7.200" fill="#ffffff" letter-spacing="0.600">34±0.25</text><circle cx="546" cy="264" r="2.300" fill="none" stroke="#ffffff" stroke-width=".7"/><path d="M543.600 267.400L548.400 260.600" stroke="#ffffff" stroke-width=".7"/>
</g>
<g><rect x="580" y="200" width="8.800" height="9.800" fill="none" stroke="#f0b8c0" stroke-width=".7"/><rect x="588.800" y="200" width="9.200" height="9.800" fill="none" stroke="#f0b8c0" stroke-width=".7"/><text x="584.400" y="207.500" font-size="7" text-anchor="middle" fill="#f0b8c0">J</text><text x="593.400" y="207.500" font-size="7" text-anchor="middle" fill="#f0b8c0">C</text></g>
<g transform="translate(542.700 238.900)"><svg width="73.90" height="10.60" viewBox="0 0 73.90 10.60"><rect x="0.40" y="0.40" width="39.00" height="9.80" fill="none" stroke="#b05040" stroke-width="0.8"/><path d="M13.40 0.40v9.80M30.40 0.40v9.80" stroke="#b05040" stroke-width="0.8"/><circle cx="6.90" cy="5.30" r="2.304878048780488" fill="none" stroke="#b05040" stroke-width="0.8"/><path d="M3.49 5.30h6.83M6.90 1.89v6.83" stroke="#b05040" stroke-width="0.8"/><text x="22.53" y="7.82" font-size="7" text-anchor="middle" fill="#c2503c" stroke="#c2503c" stroke-width="0.15" font-weight="normal" letter-spacing="0.4">0.1</text><text x="35.18" y="7.82" font-size="7" text-anchor="middle" fill="#c2503c" stroke="#c2503c" stroke-width="0.15" font-weight="normal" letter-spacing="0">A</text><path d="M46.40 0.40H68.40L73.00 5.30L68.40 10.20H46.40L40.40 5.30Z M46.40 0.40V10.20 M58.80 0.40V10.20 M68.40 0.40V10.20" fill="none" stroke="#b05040" stroke-width="0.8" stroke-linejoin="miter"/><path d="M49.00 9.00L53.20 1.60M52.00 9.00L56.20 1.60" stroke="#b05040" stroke-width="0.8"/><text x="63.60" y="7.82" font-size="7" text-anchor="middle" fill="#c2503c" stroke="#c2503c" stroke-width="0.15" font-weight="normal">A</text></svg></g>
<circle cx="549.600" cy="244.200" r="2.500" fill="none" stroke="#e0201a" stroke-width="1"/><path d="M545.600 244.200h8M549.600 240.200v8" stroke="#e0201a" stroke-width="1"/>
<path d="M543 264H534.500L532 275.500" fill="none" stroke="#a0503a" stroke-width=".9"/>
<g fill="none" stroke="#0a3fc8" stroke-width=".5"><path d="M378.500 403.500c1.500 -1.500 3 -.5 2 1.500c-1 2 1 3 2 1.500M380 408.500l2 -.5"/><path d="M366 470.500h3M371 470.500h2"/><path d="M485 398.500V432" stroke-dasharray="1.200 1.600"/><path d="M482 432V440H491" stroke-width=".7"/><path d="M485 440l5 2.500"/></g>
<path d="M382.800 503A12 12 0 0 1 395 491.500V503Z" fill="#c8c8c8" opacity=".8" transform="matrix(-1 0 0 1 777.800 0)"/>
<path d="M384 502L389.500 495.500" stroke="#3c9a3c" stroke-width="1.100"/>
<path d="M380.800 503.500V486H379.600L382 482L384.400 486H383.200V503.500Z" fill="#c42020"/>
<path d="M381 502.200H397.500V500.800L401.300 503.300L397.500 505.800V504.600H381Z" fill="#1010c8"/>
<text x="379.600" y="480" font-size="6.400" fill="#a83030">Z</text><text x="402.300" y="502.800" font-size="6.400" fill="#2020a0">X</text>
</svg>
<div class="abs" style="left:478.800px;top:90px;width:263.500px;height:16.200px;background:#fdfdfd;border-radius:0 0 2px 2px"></div>
<div class="abs" style="left:481px;top:91.500px;width:22.5px;height:13.600px;border:0.600px solid #dadada;background:#fff"></div>
<div class="abs" style="left:507px;top:91.500px;width:24px;height:13.600px;border:0.600px solid #dadada;background:#fff"></div>
<div class="abs" style="left:580px;top:91.500px;width:26px;height:13.600px;border:0.600px solid #dadada;background:#fff"></div>
<div class="abs" style="left:609px;top:91.500px;width:30px;height:13.600px;border:0.600px solid #dadada;background:#fff"></div>
<div class="abs" style="left:666px;top:91.500px;width:44px;height:13.600px;border:0.600px solid #dadada;background:#fff"></div>
<div class="abs" style="left:713px;top:91.500px;width:27px;height:13.600px;border:0.600px solid #dadada;background:#fff"></div>
<div class="abs" style="left:580.5px;top:92px;width:16.5px;height:12.600px;background:#cfe3f7"></div>
<div class="abs" style="left:609.5px;top:92px;width:21.5px;height:12.600px;background:#cfe3f7"></div>
<div class="abs" style="left:643px;top:92px;width:19px;height:12.600px;background:#cfe3f7"></div>
<div class="abs" style="left:666.5px;top:92px;width:18.5px;height:12.600px;background:#cfe3f7"></div>
<svg class="abs" style="left:497px;top:97.300px" width="4" height="3" viewBox="0 0 4 3"><path d="M0.200 0.300H3.800L2 2.700Z" fill="#222"/></svg>
<svg class="abs" style="left:525.3px;top:97.300px" width="4" height="3" viewBox="0 0 4 3"><path d="M0.200 0.300H3.800L2 2.700Z" fill="#222"/></svg>
<svg class="abs" style="left:600px;top:97.300px" width="4" height="3" viewBox="0 0 4 3"><path d="M0.200 0.300H3.800L2 2.700Z" fill="#222"/></svg>
<svg class="abs" style="left:633.5px;top:97.300px" width="4" height="3" viewBox="0 0 4 3"><path d="M0.200 0.300H3.800L2 2.700Z" fill="#222"/></svg>
<svg class="abs" style="left:703.7px;top:97.300px" width="4" height="3" viewBox="0 0 4 3"><path d="M0.200 0.300H3.800L2 2.700Z" fill="#222"/></svg>
<svg class="abs" style="left:733.5px;top:97.300px" width="4" height="3" viewBox="0 0 4 3"><path d="M0.200 0.300H3.800L2 2.700Z" fill="#222"/></svg>
<svg class="abs" style="left:478px;top:90px" width="265" height="17" viewBox="478 90 265 17">
<g transform="translate(483.2 93.6) scale(1)"><path d="M0 2.600L2.600 0.400H9.200L6.600 2.600Z" fill="#6db6f2"/><path d="M0 2.600H6.600V9.600H0Z" fill="#2f8ae2"/><path d="M6.600 2.600L9.200 0.400V7.200L6.600 9.600Z" fill="#1a66bd"/></g>
<g><path d="M509.500 94.500h3v5.500h-3zM513 94.500h2.600v5.500H513z" fill="#8a8a8a"/><path d="M509.500 95.800h6" stroke="#555" stroke-width=".6"/><circle cx="518.200" cy="96.800" r="2.700" fill="#e8f2fc" stroke="#666" stroke-width=".7"/><path d="M516.300 99L513.600 102.600" stroke="#444" stroke-width="1"/></g>
<g transform="translate(537.5 94) scale(0.95)"><path d="M0 2.600L2.600 0.400H9.200L6.600 2.600Z" fill="#f8c4c4"/><path d="M0 2.600H6.600V9.600H0Z" fill="#ef9a9a"/><path d="M6.600 2.600L9.200 0.400V7.200L6.600 9.600Z" fill="#e07f7f"/></g><g transform="translate(547 97.6)"><circle cx="2.400" cy="2.800" r="1.900" fill="none" stroke="#333" stroke-width=".7"/><path d="M0.400 5.400L4.600 0.200" stroke="#333" stroke-width=".7"/></g>
<g transform="translate(559.5 94) scale(0.95)"><path d="M0 2.600L2.600 0.400H9.200L6.600 2.600Z" fill="#a6eca6"/><path d="M0 2.600H6.600V9.600H0Z" fill="#66d466"/><path d="M6.600 2.600L9.200 0.400V7.200L6.600 9.600Z" fill="#44b544"/></g><g transform="translate(569 97.6)"><circle cx="2.400" cy="2.800" r="1.900" fill="none" stroke="#333" stroke-width=".7"/><path d="M0.400 5.400L4.600 0.200" stroke="#333" stroke-width=".7"/></g>
<g><path d="M582.500 94h3v2h-3zM583 96.500h6v2h-6zM582 99h9v3h-9z" fill="#7a7a7a"/><path d="M582 99h9v1h-9z" fill="#b0b0b0"/></g><g transform="translate(589.3000000000001 98.2)"><path d="M0 2.200Q3.300 -1.800 6.600 2.200Q3.300 6.200 0 2.200Z" fill="#2d8bd9"/><circle cx="3.300" cy="2.200" r="1.150" fill="#1f78d0" stroke="#e4f1fc" stroke-width=".55"/></g>
<g fill="#fff" stroke="#7a8aa0" stroke-width=".6"><rect x="611" y="93.500" width="5" height="5"/><rect x="613" y="96" width="6" height="6"/><circle cx="616" cy="99" r="2"/></g><path d="M621.500 93.500V103" stroke="#555" stroke-width=".6"/><g transform="translate(623.2 98.2)"><path d="M0 2.200Q3.300 -1.800 6.600 2.200Q3.300 6.200 0 2.200Z" fill="#2d8bd9"/><circle cx="3.300" cy="2.200" r="1.150" fill="#1f78d0" stroke="#e4f1fc" stroke-width=".55"/></g>
<path d="M646 93.300V101.500H653M646 101.500L650 97.500" fill="none" stroke="#222" stroke-width="1"/><g transform="translate(653.3000000000001 98.2)"><path d="M0 2.200Q3.300 -1.800 6.600 2.200Q3.300 6.200 0 2.200Z" fill="#2d8bd9"/><circle cx="3.300" cy="2.200" r="1.150" fill="#1f78d0" stroke="#e4f1fc" stroke-width=".55"/></g>
<path d="M668 95L671 93.500H674V97H678V102.500H668Z" fill="#8c8c8c"/><path d="M668 95h3.500v7.500H668z" fill="#a9a9a9"/><g transform="translate(676.7 98.4)"><path d="M0 2.200Q3.300 -1.800 6.600 2.200Q3.300 6.200 0 2.200Z" fill="#2d8bd9"/><circle cx="3.300" cy="2.200" r="1.150" fill="#1f78d0" stroke="#e4f1fc" stroke-width=".55"/></g>
<text x="692" y="100.800" font-size="6" fill="#222" letter-spacing="-.2">0%</text>
<g><path d="M716.500 94.200H727" stroke="#555" stroke-width=".7"/><circle cx="716.300" cy="94.200" r="1.100" fill="#fff" stroke="#555" stroke-width=".6"/><circle cx="727.200" cy="94.200" r="1.100" fill="#fff" stroke="#555" stroke-width=".6"/><circle cx="717.600" cy="101" r="1.500" fill="#f2a35a"/><path d="M722 97.500v6M722 97.500l5.500 2.400l-5.500 2.400z" fill="#d42020" stroke="#d42020" stroke-width=".5"/></g>
</svg>
<div id="prog" class="abs" style="left:877px;top:74px;width:147px;height:466px;background:#fff;overflow:hidden">
<div class="abs phead" style="left:0;top:0;width:147px;background:#e1e1e1;color:#444"><span style="left:2.8px;letter-spacing:-0.4px">Program View</span><svg class="abs" style="left:114px;top:2px" width="33" height="10" viewBox="0 0 33 10"><path d="M1 3.400h4.400l-2.200 2.800z" fill="#333"/><path d="M12.800 1.600h2.600v3.400h-2.600zM11.800 5h4.600M14.100 5v3.400" stroke="#333" stroke-width=".8" fill="none"/><path d="M23.400 2.400l4.600 4.600m0 -4.600l-4.600 4.600" stroke="#222" stroke-width="1.200"/></svg></div>
<div class="abs" style="left:7.00px;top:20.00px;width:5.40px;height:5.40px;background:#1f7fd8"></div>
<div class="abs" style="left:20.50px;top:19.20px;"><svg width="6" height="7" viewBox="0 0 6 7"><path d="M5.400 0.500V6.500L0.600 3.500Z" fill="#1f7fd8"/></svg></div>
<div class="abs" style="left:32.60px;top:19.20px;"><svg width="6" height="7" viewBox="0 0 6 7"><path d="M0.600 0.500V6.500L5.400 3.500Z" fill="#1f7fd8"/></svg></div>
<div class="abs" style="left:45.70px;top:22.20px;width:4.20px;height:1.00px;background:#1f7fd8"></div>
<div class="tx" style="left:58.60px;top:19.70px;color:#444;">x1</div>
<div class="abs" style="left:74.00px;top:20.20px;"><svg width="5" height="5" viewBox="0 0 5 5"><path d="M2.500 0.300L3.200 1.800L4.700 2.500L3.200 3.200L2.500 4.700L1.800 3.200L0.300 2.500L1.800 1.800Z" fill="#1f7fd8"/></svg></div>
<div class="abs" style="left:121.00px;top:18.00px;"><svg width="9" height="9" viewBox="0 0 9 9"><g fill="#fff" stroke="#666" stroke-width=".7"><rect x="3.600" y="0.600" width="4.600" height="4.600"/><rect x="2.200" y="2" width="4.600" height="4.600"/><rect x="0.600" y="3.600" width="4.600" height="4.600"/></g><path d="M1.800 5.900h2.200" stroke="#444" stroke-width=".7"/></svg></div>
<div class="abs" style="left:135.00px;top:18.00px;"><svg width="9" height="9" viewBox="0 0 9 9"><g fill="#fff" stroke="#666" stroke-width=".7"><rect x="3.600" y="0.600" width="4.600" height="4.600"/><rect x="2.200" y="2" width="4.600" height="4.600"/><rect x="0.600" y="3.600" width="4.600" height="4.600"/></g><path d="M1.800 5.900h2.200M2.900 4.800v2.200" stroke="#444" stroke-width=".7"/></svg></div>
<div class="abs" style="left:6.40px;top:38.20px;"><svg width="7" height="7" viewBox="0 0 7 7"><path d="M5.900 2.200A2.800 2.800 0 1 0 6.300 4.200" fill="none" stroke="#1f7fd8" stroke-width="1"/><path d="M4.200 0.400L6.800 0.800L6.200 3.200Z" fill="#1f7fd8"/></svg></div>
<div class="tx" style="left:18.00px;top:39.00px;color:#444;letter-spacing:-0.170px;">0:00:00</div>
<div class="abs" style="left:47.00px;top:40.60px;width:64.00px;height:2.20px;background:#e0e0e0"></div>
<div class="abs" style="left:42.00px;top:36.80px;width:5.00px;height:9.40px;background:#ececec;border:0.500px solid #cfcfcf"></div>
<div class="tx" style="left:116.00px;top:39.00px;color:#444;letter-spacing:-0.270px;">0:14:25</div>
<div class="abs" style="left:140.50px;top:36.50px;width:0.60px;height:10.00px;background:#bbb"></div>
<div class="abs" style="left:0.20px;top:50.20px;width:145.60px;height:414.60px;border:0.800px solid #8f949c;background:#fff"></div>
<div class="abs" style="left:6.00px;top:54.50px;"><svg width="5" height="6" viewBox="0 0 5 6"><path d="M1 0.6L4 3L1 5.4Z" fill="#fff" stroke="#a8a8a8" stroke-width=".6"/></svg></div>
<div class="abs" style="left:13.40px;top:53.70px;"><svg width="8" height="7" viewBox="0 0 8 7"><path d="M1.600 6.400V3.400Q1.600 1.800 3.200 1.800H6.400V4" fill="#fdf6cf" stroke="none"/><path d="M1.200 6.600V3.400Q1.200 1.500 3.200 1.500H6.400V3.600" fill="none" stroke="#4a4a4a" stroke-width=".8"/><path d="M5.200 3.200H7.600L6.400 4.800Z" fill="#4a4a4a"/></svg></div>
<div class="tx" style="left:22.40px;top:55.00px;color:#333;letter-spacing:-0.146px;">Transition from &nbsp;Start</div>
<div class="abs" style="left:6.00px;top:65.19px;"><svg width="5" height="6" viewBox="0 0 5 6"><path d="M1 0.6L4 3L1 5.4Z" fill="#fff" stroke="#a8a8a8" stroke-width=".6"/></svg></div>
<div class="abs" style="left:13.60px;top:64.59px;"><svg width="7.0" height="7.0" viewBox="0 0 7 7"><path d="M0.700 1.900L6.300 0.500V5.500L0.700 6.800Z" fill="#b98a1c" stroke="#8f6a12" stroke-width=".5"/></svg></div>
<div class="tx" style="left:22.40px;top:65.69px;color:#333;letter-spacing:-0.296px;">Plane &nbsp;- &nbsp;2_321 &nbsp;-</div>
<div class="abs" style="left:71.00px;top:63.59px;"><svg width="9.600" height="9.600" viewBox="0 0 10 10"><rect x="0.5" y="0.5" width="9" height="9" fill="#fff" stroke="#3c3c3c" stroke-width=".7"/><text x="5" y="7.4" font-size="6.6" text-anchor="middle" fill="#444">H</text></svg></div>
<div class="abs" style="left:6.00px;top:75.89px;"><svg width="5" height="6" viewBox="0 0 5 6"><path d="M1 0.6L4 3L1 5.4Z" fill="#fff" stroke="#a8a8a8" stroke-width=".6"/></svg></div>
<div class="abs" style="left:13.40px;top:75.09px;"><svg width="8" height="7" viewBox="0 0 8 7"><path d="M1.600 6.400V3.400Q1.600 1.800 3.200 1.800H6.400V4" fill="#fdf6cf" stroke="none"/><path d="M1.200 6.600V3.400Q1.200 1.500 3.200 1.500H6.400V3.600" fill="none" stroke="#4a4a4a" stroke-width=".8"/><path d="M5.200 3.200H7.600L6.400 4.800Z" fill="#4a4a4a"/></svg></div>
<div class="tx" style="left:22.40px;top:76.39px;color:#333;letter-spacing:-0.237px;">Transition</div>
<div class="abs" style="left:6.00px;top:86.58px;"><svg width="5" height="6" viewBox="0 0 5 6"><path d="M1 0.6L4 3L1 5.4Z" fill="#fff" stroke="#a8a8a8" stroke-width=".6"/></svg></div>
<div class="abs" style="left:14.00px;top:85.38px;"><svg width="6.0" height="8.0" viewBox="0 0 6 8"><path d="M0.800 1.800V6.200A2.200 1.100 0 0 0 5.200 6.200V1.800Z" fill="#b07f14" stroke="#5e430a" stroke-width=".6"/><ellipse cx="3" cy="1.800" rx="2.200" ry="1.100" fill="#d9a935" stroke="#5e430a" stroke-width=".6"/></svg></div>
<div class="tx" style="left:22.40px;top:87.08px;color:#333;letter-spacing:-0.238px;">Cylinder &nbsp;- &nbsp;2_165 &nbsp;-</div>
<div class="abs" style="left:78.00px;top:84.98px;"><svg width="9.600" height="9.600" viewBox="0 0 10 10"><rect x="0.5" y="0.5" width="9" height="9" fill="#fff" stroke="#3c3c3c" stroke-width=".7"/><text x="5" y="7.4" font-size="6.6" text-anchor="middle" fill="#444">B</text></svg></div>
<div class="abs" style="left:12.299999999999955px;top:94.77px"><svg width="40" height="11" viewBox="0 0 40 11"><circle cx="3.400" cy="5.600" r="2.500" fill="none" stroke="#222" stroke-width=".8"/><path d="M0.800 9.200L6 2" stroke="#222" stroke-width=".8"/><text x="7" y="8.300" font-size="7.600" letter-spacing="0.700" fill="#222">40±0.1</text></svg></div>
<div class="tx" style="left:48.50px;top:97.77px;color:#333;">- &nbsp;Diameter 2 &nbsp;-</div>
<div class="abs" style="left:94.60px;top:97.07px;"><svg width="4.800000000000001" height="6.4" viewBox="0 0 6 8"><path d="M0.800 1.800V6.200A2.200 1.100 0 0 0 5.200 6.200V1.800Z" fill="#b07f14" stroke="#5e430a" stroke-width=".6"/><ellipse cx="3" cy="1.800" rx="2.200" ry="1.100" fill="#d9a935" stroke="#5e430a" stroke-width=".6"/></svg></div>
<div class="tx" style="left:102.00px;top:97.77px;color:#333;">2_165</div>
<div class="abs" style="left:6.00px;top:107.97px;"><svg width="5" height="6" viewBox="0 0 5 6"><path d="M1 0.6L4 3L1 5.4Z" fill="#fff" stroke="#a8a8a8" stroke-width=".6"/></svg></div>
<div class="abs" style="left:13.40px;top:107.16px;"><svg width="8" height="7" viewBox="0 0 8 7"><path d="M1.600 6.400V3.400Q1.600 1.800 3.200 1.800H6.400V4" fill="#fdf6cf" stroke="none"/><path d="M1.200 6.600V3.400Q1.200 1.500 3.200 1.500H6.400V3.600" fill="none" stroke="#4a4a4a" stroke-width=".8"/><path d="M5.200 3.200H7.600L6.400 4.800Z" fill="#4a4a4a"/></svg></div>
<div class="tx" style="left:22.40px;top:108.47px;color:#333;letter-spacing:-0.237px;">Transition</div>
<div class="abs" style="left:6.00px;top:118.66px;"><svg width="5" height="6" viewBox="0 0 5 6"><path d="M1 0.6L4 3L1 5.4Z" fill="#fff" stroke="#a8a8a8" stroke-width=".6"/></svg></div>
<div class="abs" style="left:13.60px;top:118.06px;"><svg width="7.0" height="7.0" viewBox="0 0 7 7"><path d="M0.700 1.900L6.300 0.500V5.500L0.700 6.800Z" fill="#b98a1c" stroke="#8f6a12" stroke-width=".5"/></svg></div>
<div class="tx" style="left:22.40px;top:119.16px;color:#333;letter-spacing:-0.323px;">Plane &nbsp;- &nbsp;2_84 &nbsp;-</div>
<div class="abs" style="left:67.00px;top:117.06px;"><svg width="9.600" height="9.600" viewBox="0 0 10 10"><rect x="0.5" y="0.5" width="9" height="9" fill="#fff" stroke="#3c3c3c" stroke-width=".7"/><text x="5" y="7.4" font-size="6.6" text-anchor="middle" fill="#444">A</text></svg></div>
<div class="abs" style="left:6.00px;top:129.35px;"><svg width="5" height="6" viewBox="0 0 5 6"><path d="M1 0.6L4 3L1 5.4Z" fill="#fff" stroke="#a8a8a8" stroke-width=".6"/></svg></div>
<div class="abs" style="left:13.40px;top:128.55px;"><svg width="8" height="7" viewBox="0 0 8 7"><path d="M1.600 6.400V3.400Q1.600 1.800 3.200 1.800H6.400V4" fill="#fdf6cf" stroke="none"/><path d="M1.200 6.600V3.400Q1.200 1.500 3.200 1.500H6.400V3.600" fill="none" stroke="#4a4a4a" stroke-width=".8"/><path d="M5.200 3.200H7.600L6.400 4.800Z" fill="#4a4a4a"/></svg></div>
<div class="tx" style="left:22.40px;top:129.85px;color:#333;letter-spacing:-0.237px;">Transition</div>
<div class="abs" style="left:6.00px;top:140.04px;"><svg width="5" height="6" viewBox="0 0 5 6"><path d="M1 0.6L4 3L1 5.4Z" fill="#fff" stroke="#a8a8a8" stroke-width=".6"/></svg></div>
<div class="abs" style="left:13.60px;top:139.44px;"><svg width="7.0" height="7.0" viewBox="0 0 7 7"><path d="M0.700 1.900L6.300 0.500V5.500L0.700 6.800Z" fill="#b98a1c" stroke="#8f6a12" stroke-width=".5"/></svg></div>
<div class="tx" style="left:22.40px;top:140.54px;color:#333;letter-spacing:-0.323px;">Plane &nbsp;- &nbsp;2_86 &nbsp;-</div>
<div class="abs" style="left:67.00px;top:138.44px;"><svg width="9.600" height="9.600" viewBox="0 0 10 10"><rect x="0.5" y="0.5" width="9" height="9" fill="#fff" stroke="#3c3c3c" stroke-width=".7"/><text x="5" y="7.4" font-size="6.6" text-anchor="middle" fill="#444">C</text></svg></div>
<div class="abs" style="left:6.00px;top:150.74px;"><svg width="5" height="6" viewBox="0 0 5 6"><path d="M1 0.6L4 3L1 5.4Z" fill="#fff" stroke="#a8a8a8" stroke-width=".6"/></svg></div>
<div class="abs" style="left:13.40px;top:149.94px;"><svg width="8" height="7" viewBox="0 0 8 7"><path d="M1.600 6.400V3.400Q1.600 1.800 3.200 1.800H6.400V4" fill="#fdf6cf" stroke="none"/><path d="M1.200 6.600V3.400Q1.200 1.500 3.200 1.500H6.400V3.600" fill="none" stroke="#4a4a4a" stroke-width=".8"/><path d="M5.200 3.200H7.600L6.400 4.800Z" fill="#4a4a4a"/></svg></div>
<div class="tx" style="left:22.40px;top:151.24px;color:#333;letter-spacing:-0.237px;">Transition</div>
<div class="abs" style="left:6.00px;top:161.43px;"><svg width="5" height="6" viewBox="0 0 5 6"><path d="M1 0.6L4 3L1 5.4Z" fill="#fff" stroke="#a8a8a8" stroke-width=".6"/></svg></div>
<div class="abs" style="left:13.40px;top:160.43px;"><svg width="7.6" height="7.6" viewBox="0 0 8 8"><circle cx="4" cy="4" r="3.5" fill="#b98a1c" stroke="#7d5a0e" stroke-width=".6"/><circle cx="4" cy="4" r="1.9" fill="#e8b840"/></svg></div>
<div class="tx" style="left:22.40px;top:161.93px;color:#333;letter-spacing:-0.371px;">Sphere &nbsp;- &nbsp;2_247</div>
<div class="abs" style="left:12.60px;top:170.52px;"><svg width="66.90" height="10.60" viewBox="0 0 66.90 10.60"><rect x="0.40" y="0.40" width="65.60" height="9.80" fill="none" stroke="#3c3c3c" stroke-width="0.8"/><path d="M15.70 0.40v9.80M46.50 0.40v9.80M56.00 0.40v9.80" stroke="#3c3c3c" stroke-width="0.8"/><circle cx="8.05" cy="5.30" r="2.502439024390244" fill="none" stroke="#3c3c3c" stroke-width="0.8"/><path d="M4.34 5.30h7.41M8.05 1.59v7.41" stroke="#3c3c3c" stroke-width="0.8"/><text x="19.96" y="8.04" font-size="7.6" fill="#3c3c3c" stroke="#3c3c3c" stroke-width="0.08" font-weight="normal">S</text><circle cx="28.49" cy="5.30" r="2.5024390243902443" fill="none" stroke="#3c3c3c" stroke-width="0.7200000000000001"/><path d="M25.69 8.80L31.29 1.80" stroke="#3c3c3c" stroke-width="0.7200000000000001"/><text x="32.01" y="8.04" font-size="7.6" fill="#3c3c3c" stroke="#3c3c3c" stroke-width="0.08" font-weight="normal" letter-spacing="0.35">0.5</text><text x="51.55" y="8.04" font-size="7.6" text-anchor="middle" fill="#3c3c3c" stroke="#3c3c3c" stroke-width="0.08" font-weight="normal" letter-spacing="0">A</text><text x="61.30" y="8.04" font-size="7.6" text-anchor="middle" fill="#3c3c3c" stroke="#3c3c3c" stroke-width="0.08" font-weight="normal" letter-spacing="0">C</text></svg></div>
<div class="tx" style="left:82.00px;top:172.62px;color:#333;">- &nbsp;Position 1 &nbsp;-</div>
<div class="abs" style="left:123.50px;top:171.92px;"><svg width="5.6" height="5.6" viewBox="0 0 8 8"><circle cx="4" cy="4" r="3.5" fill="#b98a1c" stroke="#7d5a0e" stroke-width=".6"/><circle cx="4" cy="4" r="1.9" fill="#e8b840"/></svg></div>
<div class="tx" style="left:131.50px;top:172.62px;color:#333;">2_247</div>
<div class="abs" style="left:6.00px;top:182.82px;"><svg width="5" height="6" viewBox="0 0 5 6"><path d="M1 0.6L4 3L1 5.4Z" fill="#fff" stroke="#a8a8a8" stroke-width=".6"/></svg></div>
<div class="abs" style="left:13.40px;top:182.02px;"><svg width="8" height="7" viewBox="0 0 8 7"><path d="M1.600 6.400V3.400Q1.600 1.800 3.200 1.800H6.400V4" fill="#fdf6cf" stroke="none"/><path d="M1.200 6.600V3.400Q1.200 1.500 3.200 1.500H6.400V3.600" fill="none" stroke="#4a4a4a" stroke-width=".8"/><path d="M5.200 3.200H7.600L6.400 4.800Z" fill="#4a4a4a"/></svg></div>
<div class="tx" style="left:22.40px;top:183.32px;color:#333;letter-spacing:-0.237px;">Transition</div>
<div class="abs" style="left:6.00px;top:193.51px;"><svg width="5" height="6" viewBox="0 0 5 6"><path d="M1 0.6L4 3L1 5.4Z" fill="#fff" stroke="#a8a8a8" stroke-width=".6"/></svg></div>
<div class="abs" style="left:13.40px;top:192.51px;"><svg width="7.6" height="7.6" viewBox="0 0 8 8"><circle cx="4" cy="4" r="3.5" fill="#b98a1c" stroke="#7d5a0e" stroke-width=".6"/><circle cx="4" cy="4" r="1.9" fill="#e8b840"/></svg></div>
<div class="tx" style="left:22.40px;top:194.01px;color:#333;letter-spacing:-0.371px;">Sphere &nbsp;- &nbsp;2_282</div>
<div class="abs" style="left:12.60px;top:202.60px;"><svg width="85.40" height="10.60" viewBox="0 0 85.40 10.60"><rect x="0.40" y="0.40" width="84.10" height="9.80" fill="none" stroke="#3c3c3c" stroke-width="0.8"/><path d="M15.70 0.40v9.80M46.50 0.40v9.80M56.00 0.40v9.80M74.50 0.40v9.80" stroke="#3c3c3c" stroke-width="0.8"/><circle cx="8.05" cy="5.30" r="2.502439024390244" fill="none" stroke="#3c3c3c" stroke-width="0.8"/><path d="M4.34 5.30h7.41M8.05 1.59v7.41" stroke="#3c3c3c" stroke-width="0.8"/><text x="19.96" y="8.04" font-size="7.6" fill="#3c3c3c" stroke="#3c3c3c" stroke-width="0.08" font-weight="normal">S</text><circle cx="28.49" cy="5.30" r="2.5024390243902443" fill="none" stroke="#3c3c3c" stroke-width="0.7200000000000001"/><path d="M25.69 8.80L31.29 1.80" stroke="#3c3c3c" stroke-width="0.7200000000000001"/><text x="32.01" y="8.04" font-size="7.6" fill="#3c3c3c" stroke="#3c3c3c" stroke-width="0.08" font-weight="normal" letter-spacing="0.35">0.5</text><text x="51.55" y="8.04" font-size="7.6" text-anchor="middle" fill="#3c3c3c" stroke="#3c3c3c" stroke-width="0.08" font-weight="normal" letter-spacing="0">A</text><text x="60.80" y="8.04" font-size="7.6" text-anchor="middle" fill="#3c3c3c" stroke="#3c3c3c" stroke-width="0.08" font-weight="normal">B</text><circle cx="69.10" cy="5.30" r="4.3" fill="none" stroke="#3c3c3c" stroke-width="0.7200000000000001"/><text x="69.10" y="7.35" font-size="6.08" text-anchor="middle" fill="#3c3c3c" stroke="#3c3c3c" stroke-width="0.08" font-weight="normal">L</text><text x="79.80" y="8.04" font-size="7.6" text-anchor="middle" fill="#3c3c3c" stroke="#3c3c3c" stroke-width="0.08" font-weight="normal" letter-spacing="0">C</text></svg></div>
<div class="tx" style="left:101.00px;top:204.70px;color:#333;">- &nbsp;Position 2 &nbsp;-</div>
<div class="abs" style="left:142.50px;top:204.00px;"><svg width="5.6" height="5.6" viewBox="0 0 8 8"><circle cx="4" cy="4" r="3.5" fill="#b98a1c" stroke="#7d5a0e" stroke-width=".6"/><circle cx="4" cy="4" r="1.9" fill="#e8b840"/></svg></div>
<div class="abs" style="left:13.40px;top:214.09px;"><svg width="8" height="7" viewBox="0 0 8 7"><path d="M1.600 6.400V3.400Q1.600 1.800 3.200 1.800H6.400V4" fill="#fdf6cf" stroke="none"/><path d="M1.200 6.600V3.400Q1.200 1.500 3.200 1.500H6.400V3.600" fill="none" stroke="#4a4a4a" stroke-width=".8"/><path d="M5.200 3.200H7.600L6.400 4.800Z" fill="#4a4a4a"/></svg></div>
<div class="tx" style="left:22.40px;top:215.39px;color:#333;letter-spacing:-0.237px;">Transition</div>
<div class="abs" style="left:6.00px;top:225.59px;"><svg width="5" height="6" viewBox="0 0 5 6"><path d="M1 0.6L4 3L1 5.4Z" fill="#fff" stroke="#a8a8a8" stroke-width=".6"/></svg></div>
<div class="abs" style="left:14.00px;top:224.39px;"><svg width="6.0" height="8.0" viewBox="0 0 6 8"><path d="M0.800 1.800V6.200A2.200 1.100 0 0 0 5.200 6.200V1.800Z" fill="#b07f14" stroke="#5e430a" stroke-width=".6"/><ellipse cx="3" cy="1.800" rx="2.200" ry="1.100" fill="#d9a935" stroke="#5e430a" stroke-width=".6"/></svg></div>
<div class="tx" style="left:22.40px;top:226.09px;color:#333;letter-spacing:-0.238px;">Cylinder &nbsp;- &nbsp;2_207 &nbsp;-</div>
<div class="abs" style="left:78.60px;top:223.99px;"><svg width="9.600" height="9.600" viewBox="0 0 10 10"><rect x="0.5" y="0.5" width="9" height="9" fill="#fff" stroke="#3c3c3c" stroke-width=".7"/><text x="5" y="7.4" font-size="6.6" text-anchor="middle" fill="#444">J</text></svg></div>
<div class="abs" style="left:13.40px;top:235.48px;"><svg width="8" height="7" viewBox="0 0 8 7"><path d="M1.600 6.400V3.400Q1.600 1.800 3.200 1.800H6.400V4" fill="#fdf6cf" stroke="none"/><path d="M1.200 6.600V3.400Q1.200 1.500 3.200 1.500H6.400V3.600" fill="none" stroke="#4a4a4a" stroke-width=".8"/><path d="M5.200 3.200H7.600L6.400 4.800Z" fill="#4a4a4a"/></svg></div>
<div class="tx" style="left:22.40px;top:236.78px;color:#333;letter-spacing:-0.237px;">Transition</div>
<div class="abs" style="left:6.00px;top:246.97px;"><svg width="5" height="6" viewBox="0 0 5 6"><path d="M1 0.6L4 3L1 5.4Z" fill="#fff" stroke="#a8a8a8" stroke-width=".6"/></svg></div>
<div class="abs" style="left:13.60px;top:246.37px;"><svg width="7.0" height="7.0" viewBox="0 0 7 7"><path d="M0.700 1.900L6.300 0.500V5.500L0.700 6.800Z" fill="#b98a1c" stroke="#8f6a12" stroke-width=".5"/></svg></div>
<div class="tx" style="left:22.40px;top:247.47px;color:#333;letter-spacing:-0.3px;transform:scaleX(0.969);transform-origin:0 50%;">Plane &nbsp;- &nbsp;2_212</div>
<div class="abs" style="left:6.00px;top:257.67px;"><svg width="5" height="6" viewBox="0 0 5 6"><path d="M1 0.6L4 3L1 5.4Z" fill="#fff" stroke="#a8a8a8" stroke-width=".6"/></svg></div>
<div class="abs" style="left:13.40px;top:256.87px;"><svg width="8" height="7" viewBox="0 0 8 7"><path d="M1.600 6.400V3.400Q1.600 1.800 3.200 1.800H6.400V4" fill="#fdf6cf" stroke="none"/><path d="M1.200 6.600V3.400Q1.200 1.500 3.200 1.500H6.400V3.600" fill="none" stroke="#4a4a4a" stroke-width=".8"/><path d="M5.200 3.200H7.600L6.400 4.800Z" fill="#4a4a4a"/></svg></div>
<div class="tx" style="left:22.40px;top:258.17px;color:#333;letter-spacing:-0.237px;">Transition</div>
<div class="abs" style="left:6.00px;top:268.36px;"><svg width="5" height="6" viewBox="0 0 5 6"><path d="M1 0.6L4 3L1 5.4Z" fill="#fff" stroke="#a8a8a8" stroke-width=".6"/></svg></div>
<div class="abs" style="left:14.00px;top:267.16px;"><svg width="6.0" height="8.0" viewBox="0 0 6 8"><path d="M0.800 1.800V6.200A2.200 1.100 0 0 0 5.200 6.200V1.800Z" fill="#b07f14" stroke="#5e430a" stroke-width=".6"/><ellipse cx="3" cy="1.800" rx="2.200" ry="1.100" fill="#d9a935" stroke="#5e430a" stroke-width=".6"/></svg></div>
<div class="tx" style="left:22.40px;top:268.86px;color:#333;letter-spacing:-0.238px;">Cylinder &nbsp;- &nbsp;2_316 &nbsp;-</div>
<div class="abs" style="left:78.60px;top:266.76px;"><svg width="9.600" height="9.600" viewBox="0 0 10 10"><rect x="0.5" y="0.5" width="9" height="9" fill="#fff" stroke="#3c3c3c" stroke-width=".7"/><text x="5" y="7.4" font-size="6.6" text-anchor="middle" fill="#444">G</text></svg></div>
<div class="abs" style="left:12.299999999999955px;top:276.55px"><svg width="40" height="11" viewBox="0 0 40 11"><circle cx="3.400" cy="5.600" r="2.500" fill="none" stroke="#222" stroke-width=".8"/><path d="M0.800 9.200L6 2" stroke="#222" stroke-width=".8"/><text x="7" y="8.300" font-size="7.600" letter-spacing="0.700" fill="#222">34±0.25</text></svg></div>
<div class="tx" style="left:54.00px;top:279.55px;color:#333;">- &nbsp;Diameter 1 &nbsp;-</div>
<div class="abs" style="left:99.00px;top:278.85px;"><svg width="4.800000000000001" height="6.4" viewBox="0 0 6 8"><path d="M0.800 1.800V6.200A2.200 1.100 0 0 0 5.200 6.200V1.800Z" fill="#b07f14" stroke="#5e430a" stroke-width=".6"/><ellipse cx="3" cy="1.800" rx="2.200" ry="1.100" fill="#d9a935" stroke="#5e430a" stroke-width=".6"/></svg></div>
<div class="tx" style="left:106.50px;top:279.55px;color:#333;">2_316</div>
<div class="abs" style="left:12.60px;top:288.15px;"><svg width="50.00" height="10.60" viewBox="0 0 50.00 10.60"><rect x="0.40" y="0.40" width="48.70" height="9.80" fill="none" stroke="#3c3c3c" stroke-width="0.8"/><path d="M15.70 0.40v9.80M39.00 0.40v9.80" stroke="#3c3c3c" stroke-width="0.8"/><circle cx="8.05" cy="5.30" r="2.502439024390244" fill="none" stroke="#3c3c3c" stroke-width="0.8"/><path d="M4.34 5.30h7.41M8.05 1.59v7.41" stroke="#3c3c3c" stroke-width="0.8"/><circle cx="21.72" cy="5.30" r="2.5024390243902443" fill="none" stroke="#3c3c3c" stroke-width="0.7200000000000001"/><path d="M18.92 8.80L24.53 1.80" stroke="#3c3c3c" stroke-width="0.7200000000000001"/><text x="26.45" y="8.04" font-size="7.6" fill="#3c3c3c" stroke="#3c3c3c" stroke-width="0.08" font-weight="normal" letter-spacing="0.35">0.2</text><text x="44.35" y="8.04" font-size="7.6" text-anchor="middle" fill="#3c3c3c" stroke="#3c3c3c" stroke-width="0.08" font-weight="normal" letter-spacing="0">A</text></svg></div>
<div class="tx" style="left:65.50px;top:290.25px;color:#333;">- &nbsp;Position 3 &nbsp;-</div>
<div class="abs" style="left:108.00px;top:289.55px;"><svg width="4.800000000000001" height="6.4" viewBox="0 0 6 8"><path d="M0.800 1.800V6.200A2.200 1.100 0 0 0 5.200 6.200V1.800Z" fill="#b07f14" stroke="#5e430a" stroke-width=".6"/><ellipse cx="3" cy="1.800" rx="2.200" ry="1.100" fill="#d9a935" stroke="#5e430a" stroke-width=".6"/></svg></div>
<div class="tx" style="left:115.40px;top:290.25px;color:#333;">2_316</div>
<div class="abs" style="left:11.00px;top:298.34px;width:140.00px;height:10.90px;background:#1979ca"></div>
<div class="abs" style="left:12.60px;top:298.84px;"><svg width="80.30" height="10.60" viewBox="0 0 80.30 10.60"><rect x="0.40" y="0.40" width="41.80" height="9.80" fill="none" stroke="#fff" stroke-width="0.8"/><path d="M15.70 0.40v9.80M33.10 0.40v9.80" stroke="#fff" stroke-width="0.8"/><circle cx="8.05" cy="5.30" r="2.502439024390244" fill="none" stroke="#fff" stroke-width="0.8"/><path d="M4.34 5.30h7.41M8.05 1.59v7.41" stroke="#fff" stroke-width="0.8"/><text x="25.08" y="8.04" font-size="7.6" text-anchor="middle" fill="#fff" stroke="#fff" stroke-width="0.35" font-weight="normal" letter-spacing="0.4">0.1</text><text x="37.95" y="8.04" font-size="7.6" text-anchor="middle" fill="#fff" stroke="#fff" stroke-width="0.35" font-weight="normal" letter-spacing="0">A</text><path d="M48.80 0.40H73.60L79.40 5.30L73.60 10.20H48.80L43.20 5.30Z M48.80 0.40V10.20 M63.50 0.40V10.20 M73.60 0.40V10.20" fill="none" stroke="#fff" stroke-width="0.8" stroke-linejoin="miter"/><path d="M52.55 9.00L56.75 1.60M55.55 9.00L59.75 1.60" stroke="#fff" stroke-width="0.8"/><text x="68.55" y="8.04" font-size="7.6" text-anchor="middle" fill="#fff" stroke="#fff" stroke-width="0.35" font-weight="normal">A</text></svg></div>
<div class="tx" style="left:96.40px;top:300.94px;color:#fff;">- &nbsp;Position 6 &nbsp;-</div>
<div class="abs" style="left:139.00px;top:300.24px;"><svg width="4.800000000000001" height="6.4" viewBox="0 0 6 8"><path d="M0.800 1.800V6.200A2.200 1.100 0 0 0 5.200 6.200V1.800Z" fill="#b07f14" stroke="#5e430a" stroke-width=".6"/><ellipse cx="3" cy="1.800" rx="2.200" ry="1.100" fill="#d9a935" stroke="#5e430a" stroke-width=".6"/></svg></div>
<div class="abs" style="left:12.60px;top:309.53px;"><svg width="80.30" height="10.60" viewBox="0 0 80.30 10.60"><rect x="0.40" y="0.40" width="41.80" height="9.80" fill="none" stroke="#3c3c3c" stroke-width="0.8"/><path d="M15.70 0.40v9.80M33.10 0.40v9.80" stroke="#3c3c3c" stroke-width="0.8"/><circle cx="8.05" cy="5.30" r="2.502439024390244" fill="none" stroke="#3c3c3c" stroke-width="0.8"/><path d="M4.34 5.30h7.41M8.05 1.59v7.41" stroke="#3c3c3c" stroke-width="0.8"/><text x="25.08" y="8.04" font-size="7.6" text-anchor="middle" fill="#3c3c3c" stroke="#3c3c3c" stroke-width="0.08" font-weight="normal" letter-spacing="0.4">0.1</text><text x="37.95" y="8.04" font-size="7.6" text-anchor="middle" fill="#3c3c3c" stroke="#3c3c3c" stroke-width="0.08" font-weight="normal" letter-spacing="0">C</text><path d="M48.80 0.40H73.60L79.40 5.30L73.60 10.20H48.80L43.20 5.30Z M48.80 0.40V10.20 M63.50 0.40V10.20 M73.60 0.40V10.20" fill="none" stroke="#3c3c3c" stroke-width="0.8" stroke-linejoin="miter"/><path d="M50.20 9.10h11.90M56.15 9.10V2.40" stroke="#3c3c3c" stroke-width="0.8"/><text x="68.55" y="8.04" font-size="7.6" text-anchor="middle" fill="#3c3c3c" stroke="#3c3c3c" stroke-width="0.08" font-weight="normal">C</text></svg></div>
<div class="tx" style="left:96.40px;top:311.63px;color:#333;">- &nbsp;Position 9 &nbsp;-</div>
<div class="abs" style="left:139.00px;top:310.93px;"><svg width="4.800000000000001" height="6.4" viewBox="0 0 6 8"><path d="M0.800 1.800V6.200A2.200 1.100 0 0 0 5.200 6.200V1.800Z" fill="#b07f14" stroke="#5e430a" stroke-width=".6"/><ellipse cx="3" cy="1.800" rx="2.200" ry="1.100" fill="#d9a935" stroke="#5e430a" stroke-width=".6"/></svg></div>
<div class="abs" style="left:12.60px;top:320.22px;"><svg width="80.30" height="10.60" viewBox="0 0 80.30 10.60"><rect x="0.40" y="0.40" width="41.80" height="9.80" fill="none" stroke="#3c3c3c" stroke-width="0.8"/><path d="M15.70 0.40v9.80M33.10 0.40v9.80" stroke="#3c3c3c" stroke-width="0.8"/><circle cx="8.05" cy="5.30" r="2.502439024390244" fill="none" stroke="#3c3c3c" stroke-width="0.8"/><path d="M4.34 5.30h7.41M8.05 1.59v7.41" stroke="#3c3c3c" stroke-width="0.8"/><text x="25.08" y="8.04" font-size="7.6" text-anchor="middle" fill="#3c3c3c" stroke="#3c3c3c" stroke-width="0.08" font-weight="normal" letter-spacing="0.4">0.1</text><text x="37.95" y="8.04" font-size="7.6" text-anchor="middle" fill="#3c3c3c" stroke="#3c3c3c" stroke-width="0.08" font-weight="normal" letter-spacing="0">B</text><path d="M48.80 0.40H73.60L79.40 5.30L73.60 10.20H48.80L43.20 5.30Z M48.80 0.40V10.20 M63.50 0.40V10.20 M73.60 0.40V10.20" fill="none" stroke="#3c3c3c" stroke-width="0.8" stroke-linejoin="miter"/><path d="M50.20 9.10h11.90M56.15 9.10V2.40" stroke="#3c3c3c" stroke-width="0.8"/><text x="68.55" y="8.04" font-size="7.6" text-anchor="middle" fill="#3c3c3c" stroke="#3c3c3c" stroke-width="0.08" font-weight="normal">B</text></svg></div>
<div class="tx" style="left:96.40px;top:322.32px;color:#333;">- &nbsp;Position 12 &nbsp;-</div>
<div class="abs" style="left:142.00px;top:321.62px;"><svg width="4.800000000000001" height="6.4" viewBox="0 0 6 8"><path d="M0.800 1.800V6.200A2.200 1.100 0 0 0 5.200 6.200V1.800Z" fill="#b07f14" stroke="#5e430a" stroke-width=".6"/><ellipse cx="3" cy="1.800" rx="2.200" ry="1.100" fill="#d9a935" stroke="#5e430a" stroke-width=".6"/></svg></div>
<div class="abs" style="left:12.60px;top:330.92px;"><svg width="50.00" height="10.60" viewBox="0 0 50.00 10.60"><rect x="0.40" y="0.40" width="48.70" height="9.80" fill="none" stroke="#3c3c3c" stroke-width="0.8"/><path d="M15.70 0.40v9.80M39.00 0.40v9.80" stroke="#3c3c3c" stroke-width="0.8"/><circle cx="8.05" cy="5.30" r="2.502439024390244" fill="none" stroke="#3c3c3c" stroke-width="0.8"/><path d="M4.34 5.30h7.41M8.05 1.59v7.41" stroke="#3c3c3c" stroke-width="0.8"/><circle cx="21.72" cy="5.30" r="2.5024390243902443" fill="none" stroke="#3c3c3c" stroke-width="0.7200000000000001"/><path d="M18.92 8.80L24.53 1.80" stroke="#3c3c3c" stroke-width="0.7200000000000001"/><text x="26.45" y="8.04" font-size="7.6" fill="#3c3c3c" stroke="#3c3c3c" stroke-width="0.08" font-weight="normal" letter-spacing="0.35">0.1</text><text x="44.35" y="8.04" font-size="7.6" text-anchor="middle" fill="#3c3c3c" stroke="#3c3c3c" stroke-width="0.08" font-weight="normal" letter-spacing="0">J</text></svg></div>
<div class="tx" style="left:65.50px;top:333.02px;color:#333;">- &nbsp;Position 14 &nbsp;-</div>
<div class="abs" style="left:111.00px;top:332.32px;"><svg width="4.800000000000001" height="6.4" viewBox="0 0 6 8"><path d="M0.800 1.800V6.200A2.200 1.100 0 0 0 5.200 6.200V1.800Z" fill="#b07f14" stroke="#5e430a" stroke-width=".6"/><ellipse cx="3" cy="1.800" rx="2.200" ry="1.100" fill="#d9a935" stroke="#5e430a" stroke-width=".6"/></svg></div>
<div class="tx" style="left:118.60px;top:333.02px;color:#333;">2_316</div>
<div class="abs" style="left:12.60px;top:341.61px;"><svg width="58.80" height="10.60" viewBox="0 0 58.80 10.60"><rect x="0.40" y="0.40" width="57.50" height="9.80" fill="none" stroke="#3c3c3c" stroke-width="0.8"/><path d="M15.70 0.40v9.80M39.00 0.40v9.80M48.40 0.40v9.80" stroke="#3c3c3c" stroke-width="0.8"/><circle cx="8.05" cy="5.30" r="2.502439024390244" fill="none" stroke="#3c3c3c" stroke-width="0.8"/><path d="M4.34 5.30h7.41M8.05 1.59v7.41" stroke="#3c3c3c" stroke-width="0.8"/><circle cx="21.72" cy="5.30" r="2.5024390243902443" fill="none" stroke="#3c3c3c" stroke-width="0.7200000000000001"/><path d="M18.92 8.80L24.53 1.80" stroke="#3c3c3c" stroke-width="0.7200000000000001"/><text x="26.45" y="8.04" font-size="7.6" fill="#3c3c3c" stroke="#3c3c3c" stroke-width="0.08" font-weight="normal" letter-spacing="0.35">0.1</text><text x="44.00" y="8.04" font-size="7.6" text-anchor="middle" fill="#3c3c3c" stroke="#3c3c3c" stroke-width="0.08" font-weight="normal" letter-spacing="0">J</text><text x="53.45" y="8.04" font-size="7.6" text-anchor="middle" fill="#3c3c3c" stroke="#3c3c3c" stroke-width="0.08" font-weight="normal" letter-spacing="0">C</text></svg></div>
<div class="tx" style="left:75.00px;top:343.71px;color:#333;">- &nbsp;Position 17 &nbsp;-</div>
<div class="abs" style="left:120.00px;top:343.01px;"><svg width="4.800000000000001" height="6.4" viewBox="0 0 6 8"><path d="M0.800 1.800V6.200A2.200 1.100 0 0 0 5.200 6.200V1.800Z" fill="#b07f14" stroke="#5e430a" stroke-width=".6"/><ellipse cx="3" cy="1.800" rx="2.200" ry="1.100" fill="#d9a935" stroke="#5e430a" stroke-width=".6"/></svg></div>
<div class="tx" style="left:127.50px;top:343.71px;color:#333;">2_316</div>
<div class="abs" style="left:12.60px;top:352.30px;"><svg width="61.40" height="10.60" viewBox="0 0 61.40 10.60"><rect x="0.40" y="0.40" width="60.10" height="9.80" fill="none" stroke="#3c3c3c" stroke-width="0.8"/><path d="M15.70 0.40v9.80M32.10 0.40v9.80M41.50 0.40v9.80" stroke="#3c3c3c" stroke-width="0.8"/><circle cx="8.05" cy="5.30" r="2.502439024390244" fill="none" stroke="#3c3c3c" stroke-width="0.8"/><path d="M4.34 5.30h7.41M8.05 1.59v7.41" stroke="#3c3c3c" stroke-width="0.8"/><text x="24.58" y="8.04" font-size="7.6" text-anchor="middle" fill="#3c3c3c" stroke="#3c3c3c" stroke-width="0.08" font-weight="normal" letter-spacing="0.4">0.5</text><text x="37.10" y="8.04" font-size="7.6" text-anchor="middle" fill="#3c3c3c" stroke="#3c3c3c" stroke-width="0.08" font-weight="normal" letter-spacing="0">H</text><text x="46.30" y="8.04" font-size="7.6" text-anchor="middle" fill="#3c3c3c" stroke="#3c3c3c" stroke-width="0.08" font-weight="normal">G</text><circle cx="55.10" cy="5.30" r="4.3" fill="none" stroke="#3c3c3c" stroke-width="0.7200000000000001"/><text x="55.10" y="7.35" font-size="6.08" text-anchor="middle" fill="#3c3c3c" stroke="#3c3c3c" stroke-width="0.08" font-weight="normal">M</text></svg></div>
<div class="tx" style="left:77.00px;top:354.40px;color:#333;">- &nbsp;Position 4 (1/2) &nbsp;-</div>
<div class="abs" style="left:133.80px;top:353.70px;"><svg width="5.6000000000000005" height="5.6000000000000005" viewBox="0 0 7 7"><path d="M0.700 1.900L6.300 0.500V5.500L0.700 6.800Z" fill="#b98a1c" stroke="#8f6a12" stroke-width=".5"/></svg></div>
<div class="tx" style="left:142.00px;top:354.40px;color:#333;">2_212</div>
<div class="abs" style="left:12.60px;top:363.00px;"><svg width="68.30" height="10.60" viewBox="0 0 68.30 10.60"><rect x="0.40" y="0.40" width="67.00" height="9.80" fill="none" stroke="#3c3c3c" stroke-width="0.8"/><path d="M15.70 0.40v9.80M39.70 0.40v9.80M48.60 0.40v9.80" stroke="#3c3c3c" stroke-width="0.8"/><circle cx="8.05" cy="5.30" r="2.502439024390244" fill="none" stroke="#3c3c3c" stroke-width="0.8"/><path d="M4.34 5.30h7.41M8.05 1.59v7.41" stroke="#3c3c3c" stroke-width="0.8"/><circle cx="21.72" cy="5.30" r="2.5024390243902443" fill="none" stroke="#3c3c3c" stroke-width="0.7200000000000001"/><path d="M18.92 8.80L24.53 1.80" stroke="#3c3c3c" stroke-width="0.7200000000000001"/><text x="26.45" y="8.04" font-size="7.6" fill="#3c3c3c" stroke="#3c3c3c" stroke-width="0.08" font-weight="normal" letter-spacing="0.35">0.5</text><text x="44.45" y="8.04" font-size="7.6" text-anchor="middle" fill="#3c3c3c" stroke="#3c3c3c" stroke-width="0.08" font-weight="normal" letter-spacing="0">H</text><text x="53.40" y="8.04" font-size="7.6" text-anchor="middle" fill="#3c3c3c" stroke="#3c3c3c" stroke-width="0.08" font-weight="normal">G</text><circle cx="62.00" cy="5.30" r="4.3" fill="none" stroke="#3c3c3c" stroke-width="0.7200000000000001"/><text x="62.00" y="7.35" font-size="6.08" text-anchor="middle" fill="#3c3c3c" stroke="#3c3c3c" stroke-width="0.08" font-weight="normal">M</text></svg></div>
<div class="tx" style="left:84.50px;top:365.10px;color:#333;">- &nbsp;Position 4 (2/2) &nbsp;-</div>
<div class="abs" style="left:142.50px;top:364.40px;"><svg width="4.800000000000001" height="6.4" viewBox="0 0 6 8"><path d="M0.800 1.800V6.200A2.200 1.100 0 0 0 5.200 6.200V1.800Z" fill="#b07f14" stroke="#5e430a" stroke-width=".6"/><ellipse cx="3" cy="1.800" rx="2.200" ry="1.100" fill="#d9a935" stroke="#5e430a" stroke-width=".6"/></svg></div>
<div class="abs" style="left:12.60px;top:373.69px;"><svg width="50.30" height="10.60" viewBox="0 0 50.30 10.60"><rect x="0.40" y="0.40" width="49.00" height="9.80" fill="none" stroke="#3c3c3c" stroke-width="0.8"/><path d="M15.70 0.40v9.80M39.70 0.40v9.80" stroke="#3c3c3c" stroke-width="0.8"/><circle cx="8.05" cy="5.30" r="2.502439024390244" fill="none" stroke="#3c3c3c" stroke-width="0.8"/><path d="M4.34 5.30h7.41M8.05 1.59v7.41" stroke="#3c3c3c" stroke-width="0.8"/><circle cx="21.72" cy="5.30" r="2.5024390243902443" fill="none" stroke="#3c3c3c" stroke-width="0.7200000000000001"/><path d="M18.92 8.80L24.53 1.80" stroke="#3c3c3c" stroke-width="0.7200000000000001"/><text x="26.45" y="8.04" font-size="7.6" fill="#3c3c3c" stroke="#3c3c3c" stroke-width="0.08" font-weight="normal" letter-spacing="0.35">0.1</text><text x="44.85" y="8.04" font-size="7.6" text-anchor="middle" fill="#3c3c3c" stroke="#3c3c3c" stroke-width="0.08" font-weight="normal" letter-spacing="0">G</text></svg></div>
<div class="tx" style="left:65.50px;top:375.79px;color:#333;">- &nbsp;Position 5 &nbsp;-</div>
<div class="abs" style="left:108.00px;top:375.09px;"><svg width="4.800000000000001" height="6.4" viewBox="0 0 6 8"><path d="M0.800 1.800V6.200A2.200 1.100 0 0 0 5.200 6.200V1.800Z" fill="#b07f14" stroke="#5e430a" stroke-width=".6"/><ellipse cx="3" cy="1.800" rx="2.200" ry="1.100" fill="#d9a935" stroke="#5e430a" stroke-width=".6"/></svg></div>
<div class="tx" style="left:115.40px;top:375.79px;color:#333;">2_207</div>
<div class="abs" style="left:6.00px;top:385.98px;"><svg width="5" height="6" viewBox="0 0 5 6"><path d="M1 0.6L4 3L1 5.4Z" fill="#fff" stroke="#a8a8a8" stroke-width=".6"/></svg></div>
<div class="abs" style="left:13.40px;top:385.18px;"><svg width="8" height="7" viewBox="0 0 8 7"><path d="M1.600 6.400V3.400Q1.600 1.800 3.200 1.800H6.400V4" fill="#fdf6cf" stroke="none"/><path d="M1.200 6.600V3.400Q1.200 1.500 3.200 1.500H6.400V3.600" fill="none" stroke="#4a4a4a" stroke-width=".8"/><path d="M5.200 3.200H7.600L6.400 4.800Z" fill="#4a4a4a"/></svg></div>
<div class="tx" style="left:22.40px;top:386.48px;color:#333;letter-spacing:-0.218px;">Transition &nbsp;to &nbsp;End</div>
<div class="abs" style="left:1.00px;top:456.40px;width:144.00px;height:8.00px;background:#e9e9e9"></div>
<div class="abs" style="left:10.00px;top:456.60px;width:110.00px;height:7.60px;background:#fff;border:0.600px solid #b4b4b4"></div>
<div class="abs" style="left:1.20px;top:456.60px;width:8.60px;height:7.60px;background:#fff;border:0.600px solid #b4b4b4"></div>
<div class="abs" style="left:136.60px;top:456.60px;width:8.60px;height:7.60px;background:#fff;border:0.600px solid #b4b4b4"></div>
<div class="abs" style="left:3.80px;top:458.00px;"><svg width="4" height="5" viewBox="0 0 4 5"><path d="M3.200 0.600L0.800 2.500L3.200 4.400Z" fill="#333"/></svg></div>
<div class="abs" style="left:139.40px;top:458.00px;"><svg width="4" height="5" viewBox="0 0 4 5"><path d="M0.800 0.600L3.200 2.500L0.800 4.400Z" fill="#333"/></svg></div>
</div>
</body></html>
